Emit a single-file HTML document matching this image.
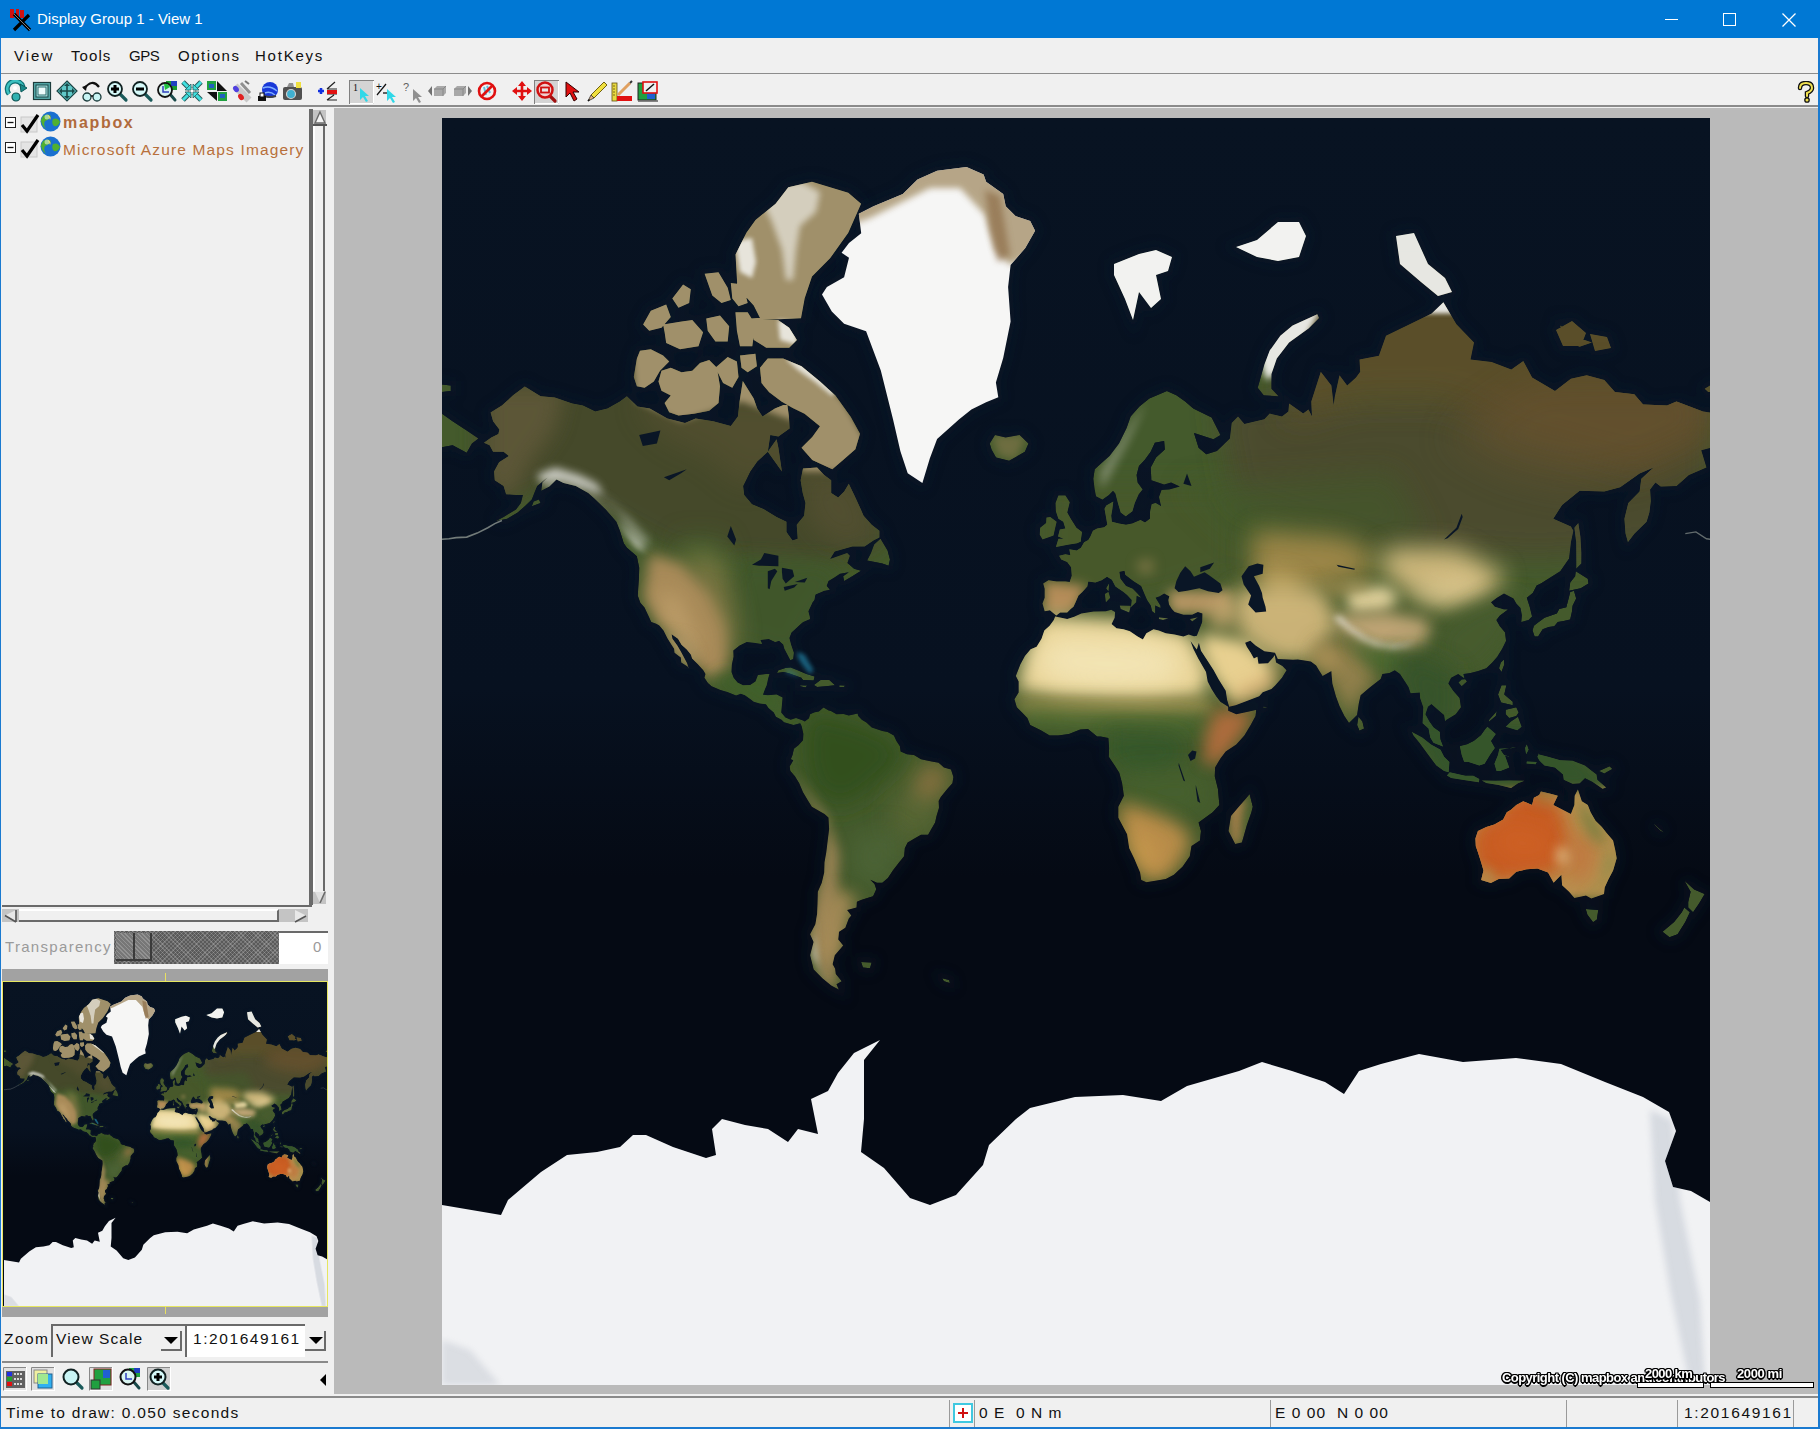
<!DOCTYPE html>
<html><head><meta charset="utf-8">
<style>
*{margin:0;padding:0;box-sizing:border-box}
html,body{width:1820px;height:1429px;overflow:hidden;background:#f0f0f0;font-family:"Liberation Sans",sans-serif}
.a{position:absolute}
#title{left:0;top:0;width:1820px;height:38px;background:#0078d4}
#title .t{left:37px;top:10px;color:#fff;font-size:15px;white-space:nowrap}
#menu{left:1px;top:38px;width:1817px;height:36px;background:#f0f0f0;border-bottom:1px solid #8c8c8c}
#menu span{position:absolute;top:9px;font-size:15px;color:#111;white-space:nowrap}
#tb{left:1px;top:75px;width:1817px;height:32px;background:#f0f0f0;border-bottom:2px solid #8a8a8a}
#left{left:1px;top:108px;width:332px;height:1288px;background:#f0f0f0}
#mapbg{left:334px;top:108px;width:1484px;height:1286px;background:#bababa}
#status{left:1px;top:1396px;width:1817px;height:31px;background:#f0f0f0;border-top:2px solid #8a8a8a}
#status span{position:absolute;top:7px;font-size:15.5px;color:#111;white-space:nowrap;letter-spacing:0.4px}
.sep{position:absolute;top:2px;width:1px;height:28px;background:#9a9a9a}
.bluel{left:0;top:38px;width:1px;height:1391px;background:#1a7ad0}
.bluer{left:1818px;top:38px;width:2px;height:1391px;background:#1a7ad0}
.blueb{left:0;top:1427px;width:1820px;height:2px;background:#1a7ad0}
.ico{position:absolute;top:80px;width:22px;height:22px}
</style></head><body>
<svg width="0" height="0" style="position:absolute"><defs>
<filter id="b2" filterUnits="userSpaceOnUse" x="-100" y="-100" width="1468" height="1467"><feGaussianBlur stdDeviation="2"/></filter><filter id="b3" filterUnits="userSpaceOnUse" x="-100" y="-100" width="1468" height="1467"><feGaussianBlur stdDeviation="3"/></filter><filter id="b4" filterUnits="userSpaceOnUse" x="-100" y="-100" width="1468" height="1467"><feGaussianBlur stdDeviation="4"/></filter><filter id="b5" filterUnits="userSpaceOnUse" x="-100" y="-100" width="1468" height="1467"><feGaussianBlur stdDeviation="5"/></filter><filter id="b6" filterUnits="userSpaceOnUse" x="-100" y="-100" width="1468" height="1467"><feGaussianBlur stdDeviation="6"/></filter><filter id="b7" filterUnits="userSpaceOnUse" x="-100" y="-100" width="1468" height="1467"><feGaussianBlur stdDeviation="7"/></filter><filter id="b8" filterUnits="userSpaceOnUse" x="-100" y="-100" width="1468" height="1467"><feGaussianBlur stdDeviation="8"/></filter><filter id="b9" filterUnits="userSpaceOnUse" x="-100" y="-100" width="1468" height="1467"><feGaussianBlur stdDeviation="9"/></filter><filter id="b10" filterUnits="userSpaceOnUse" x="-100" y="-100" width="1468" height="1467"><feGaussianBlur stdDeviation="10"/></filter><filter id="b12" filterUnits="userSpaceOnUse" x="-100" y="-100" width="1468" height="1467"><feGaussianBlur stdDeviation="12"/></filter><filter id="b14" filterUnits="userSpaceOnUse" x="-100" y="-100" width="1468" height="1467"><feGaussianBlur stdDeviation="14"/></filter><filter id="b16" filterUnits="userSpaceOnUse" x="-100" y="-100" width="1468" height="1467"><feGaussianBlur stdDeviation="16"/></filter><filter id="b18" filterUnits="userSpaceOnUse" x="-100" y="-100" width="1468" height="1467"><feGaussianBlur stdDeviation="18"/></filter><filter id="b20" filterUnits="userSpaceOnUse" x="-100" y="-100" width="1468" height="1467"><feGaussianBlur stdDeviation="20"/></filter>
<clipPath id="grclip"><path d="M416.8,95.7L431.5,88.3L460.8,76.1L475.5,61.4L495.1,52.8L524.5,49.1L541.6,56.5L544.1,63.8L561.2,76.1L563.7,88.3L573.5,98.1L588.2,103.0L593.1,112.8L583.3,129.9L568.6,147.1L566.1,169.1L568.6,203.4L561.2,240.1L553.9,264.6L556.3,279.3L544.1,284.2L529.4,291.5L517.2,301.3L495.1,320.9L487.8,340.5L480.4,365.0L465.7,355.2L458.4,333.2L451.0,301.3L438.8,252.4L424.1,213.2L402.1,205.8L389.8,193.6L380.0,176.5L384.9,169.1L402.1,159.3L407.0,139.7L399.6,134.8L407.0,125.0L419.2,115.3Z"/></clipPath>
<clipPath id="antclip"><path d="M0.0,1087.0L59.0,1097.0L66.0,1082.0L99.0,1054.0L125.0,1037.0L155.0,1034.0L178.0,1029.0L191.0,1017.0L204.0,1017.0L231.0,1029.0L264.0,1040.0L274.0,1037.0L270.0,1011.0L280.0,1001.0L303.0,1007.0L326.0,1011.0L346.0,1024.0L356.0,1011.0L376.0,1016.0L369.0,981.0L386.0,973.0L396.0,955.0L412.0,935.0L438.0,922.0L422.0,942.0L422.0,1001.0L419.0,1034.0L442.0,1050.0L468.0,1080.0L488.0,1087.0L514.0,1077.0L541.0,1047.0L547.0,1027.0L574.0,1001.0L588.0,990.0L633.0,979.0L681.0,977.0L719.0,983.0L745.0,968.0L797.0,953.0L820.0,944.0L850.0,953.0L883.0,964.0L902.0,976.0L917.0,953.0L939.0,946.0L977.0,936.0L1021.0,944.0L1074.0,940.0L1119.0,946.0L1163.0,964.0L1201.0,979.0L1227.0,994.0L1234.0,1013.0L1223.0,1043.0L1231.0,1069.0L1249.0,1073.0L1268.0,1084.0L1270.0,1272.0L-2.0,1272.0Z"/></clipPath>
<clipPath id="landclip"><path d="M41.9,324.7L49.3,319.5L56.4,316.0L57.4,311.5L51.1,303.2L48.6,294.6L59.9,287.6L71.1,277.3L82.8,268.6L98.6,278.3L112.7,279.4L130.3,285.6L140.9,287.6L153.2,293.6L165.5,290.6L177.9,283.6L184.9,278.3L195.5,288.6L207.8,290.6L225.4,300.4L243.0,305.1L253.6,300.4L271.2,303.2L288.8,307.9L295.9,298.5L297.6,283.6L300.8,263.1L311.7,280.4L315.2,290.6L320.5,298.5L332.9,290.6L345.2,285.6L346.9,298.5L347.6,310.6L336.4,318.6L328.3,316.9L325.8,333.8L315.2,343.5L308.2,353.4L301.1,367.9L302.2,376.9L310.0,386.2L322.3,391.4L334.6,398.9L344.5,403.8L344.5,413.9L350.5,422.5L355.7,420.8L354.7,406.8L362.1,397.7L363.5,384.9L360.7,374.9L358.6,362.2L361.0,350.4L375.1,349.6L382.2,357.1L389.2,362.2L389.2,374.9L396.2,379.6L402.2,373.5L406.8,365.8L412.8,378.3L417.4,388.2L421.6,397.7L429.7,406.8L437.5,412.7L437.5,419.6L431.5,422.5L422.7,428.6L410.3,428.6L398.0,431.9L392.7,433.5L388.1,441.0L405.1,435.1L407.9,437.8L405.4,445.1L412.1,450.8L419.1,452.8L410.3,458.2L402.2,463.1L401.2,458.2L406.8,454.3L398.0,455.8L392.7,459.2L386.4,463.1L384.6,468.0L387.8,471.7L382.2,472.7L373.4,476.4L372.3,481.9L370.2,484.7L369.5,486.5L366.3,493.2L367.7,498.4L368.1,501.0L361.0,504.0L357.5,507.0L349.4,514.5L347.3,519.9L349.1,526.8L351.9,534.7L351.2,541.0L348.3,542.2L345.5,536.7L342.4,530.8L341.3,526.4L337.1,522.7L333.2,524.0L326.9,521.1L322.3,521.5L318.4,521.9L320.2,526.0L311.7,524.8L304.7,524.0L297.6,527.6L291.3,532.4L291.6,538.7L289.9,546.4L289.5,554.1L291.6,559.8L295.5,564.6L301.1,567.2L308.2,566.9L313.5,563.5L315.9,557.1L324.0,556.0L327.6,556.0L326.2,560.5L324.7,567.2L323.0,570.9L320.9,576.8L325.8,577.2L334.6,576.4L340.6,579.4L339.9,587.3L339.2,594.5L343.4,599.6L348.7,601.7L354.0,599.9L361.0,602.4L362.8,603.5L367.0,600.3L368.1,596.3L372.7,594.2L376.9,593.5L381.5,589.5L386.7,592.4L388.9,593.1L394.5,596.3L401.5,596.0L406.8,597.4L415.6,595.6L416.3,598.1L419.8,601.7L424.4,604.5L429.7,609.5L440.3,613.1L445.6,614.1L451.9,617.6L454.4,622.9L457.9,628.2L458.6,633.5L464.9,636.3L472.0,637.0L479.0,641.2L489.6,643.4L496.6,644.8L501.9,649.4L509.0,651.5L511.4,658.9L510.4,665.3L505.4,670.7L498.7,678.9L496.6,682.9L497.0,689.8L494.5,697.9L493.1,704.6L489.9,709.9L486.1,716.7L479.0,716.7L473.7,719.8L465.6,724.4L462.8,730.3L462.1,738.2L457.2,744.3L450.8,752.5L445.9,760.0L440.3,764.7L435.0,764.7L428.3,761.7L432.5,766.0L434.3,771.2L431.1,778.3L419.1,781.9L414.9,783.7L414.6,789.6L405.1,792.0L409.3,797.6L406.8,800.5L403.3,809.7L397.0,813.7L396.2,821.4L401.2,827.6L392.7,837.3L390.6,846.2L393.1,850.8L393.8,856.0L399.8,863.2L394.5,866.3L397.0,871.8L389.2,867.5L380.4,860.2L371.6,851.4L368.1,837.3L371.6,824.0L368.1,816.2L373.4,806.3L375.1,795.7L375.5,786.4L375.8,773.8L379.7,765.1L382.2,754.6L382.5,744.3L384.3,734.2L385.7,722.5L387.1,711.0L386.4,699.4L382.5,696.1L369.8,688.7L365.3,681.5L361.0,674.2L357.2,665.3L352.9,658.2L348.3,652.9L347.6,648.6L351.2,642.3L348.7,641.2L350.5,637.0L351.9,630.7L356.4,627.2L361.0,622.2L361.4,615.9L359.6,608.1L358.2,605.3L351.5,607.0L342.0,604.2L339.5,601.7L333.9,598.8L331.8,594.5L326.5,589.9L324.0,586.3L317.7,585.5L311.7,583.7L308.5,581.2L302.9,577.2L298.7,575.7L294.1,577.5L285.3,573.9L278.3,572.0L269.5,568.3L265.9,565.0L262.4,559.8L263.5,556.0L261.3,552.2L256.1,546.4L250.1,540.6L249.0,536.7L244.8,531.6L239.5,526.8L236.0,520.7L229.6,516.2L230.4,520.7L235.3,527.6L238.8,533.6L242.0,539.5L245.1,545.3L246.9,550.7L245.5,548.4L239.2,544.5L238.8,539.5L232.5,534.7L232.1,530.8L228.2,524.8L225.4,520.3L221.5,512.4L217.3,507.4L214.2,505.7L209.2,504.0L207.1,499.3L204.6,494.0L202.5,489.6L198.3,484.7L195.8,477.8L196.2,470.3L196.9,460.7L197.2,449.7L194.8,438.3L184.9,429.7L181.7,425.3L177.9,412.7L174.4,403.8L163.8,391.4L152.2,380.3L146.2,374.9L133.8,367.9L121.5,365.1L114.5,361.5L107.4,368.6L99.3,372.8L100.4,364.4L105.7,359.3L95.1,367.9L92.3,374.9L89.8,381.6L82.8,388.2L75.7,394.5L65.2,400.7L53.5,403.2L61.6,398.9L74.0,391.4L78.9,384.9L81.0,376.9L74.0,376.9L64.1,376.2L61.6,367.9L52.8,362.2L52.1,353.4L57.1,344.2L66.9,337.9L61.6,333.8L51.1,333.8L47.6,327.2ZM614.3,497.5L611.8,495.4L607.9,492.3L602.7,493.2L600.5,485.6L602.7,479.7L602.7,470.8L601.2,465.6L606.5,462.2L614.6,463.6L623.4,463.6L627.7,464.1L629.8,457.8L629.1,449.2L625.2,444.1L619.2,441.5L617.1,437.8L623.4,436.2L628.4,437.3L627.3,431.3L634.7,432.4L638.9,429.7L642.1,424.2L646.3,421.9L648.4,418.5L650.9,412.7L655.1,410.4L662.2,409.2L665.3,406.8L664.3,400.7L662.5,390.7L664.3,387.5L671.3,383.6L670.3,391.4L669.2,397.7L669.9,403.8L677.0,405.6L684.0,406.8L690.4,405.6L698.5,402.0L703.0,404.4L708.0,400.7L708.0,394.5L709.7,386.2L713.6,384.9L719.2,388.2L717.1,378.9L719.6,372.1L727.3,371.4L737.9,368.6L729.1,364.4L722.1,366.5L709.4,362.2L708.7,349.6L714.0,339.5L722.8,331.4L722.1,323.0L712.9,324.7L708.7,333.8L702.7,341.9L697.0,348.1L694.6,357.1L695.6,364.4L700.6,371.4L696.7,376.2L692.8,384.9L690.4,393.3L683.7,398.3L678.7,394.5L675.9,384.9L673.4,375.6L671.0,372.8L666.8,376.9L660.4,381.6L654.1,378.3L652.7,371.4L651.3,360.8L652.7,351.2L658.7,345.8L667.5,337.9L677.0,325.5L684.7,309.7L688.6,298.5L697.4,288.6L707.3,280.4L724.9,273.0L734.4,277.3L743.2,283.6L751.3,290.6L769.6,299.4L778.4,316.9L771.4,321.2L752.0,315.1L756.6,329.7L764.3,336.3L774.9,333.0L787.9,320.4L789.7,305.1L796.0,298.5L802.4,306.0L822.4,301.3L827.7,295.6L840.0,298.5L846.4,293.6L847.1,285.6L861.2,295.6L866.5,291.6L870.0,298.5L869.3,283.6L878.8,253.8L889.4,267.5L892.9,298.5L887.6,316.0L892.9,278.3L897.5,257.3L905.2,267.5L914.0,259.6L918.2,253.8L917.5,241.6L936.9,237.8L944.0,217.7L965.1,207.6L989.7,195.5L1001.4,184.2L1014.4,206.2L1032.0,224.6L1028.5,241.6L1049.6,244.1L1069.3,251.4L1081.3,242.9L1090.1,259.6L1113.0,273.0L1128.9,260.8L1144.7,257.3L1162.3,261.9L1172.9,274.1L1192.3,276.2L1201.1,286.6L1225.0,287.6L1234.5,283.6L1261.0,293.6L1269.8,294.6L1269.8,329.7L1259.2,332.2L1264.5,349.6L1246.9,357.1L1234.5,367.9L1218.7,368.6L1213.4,364.4L1208.1,371.4L1208.8,382.9L1207.4,394.5L1204.6,403.8L1192.6,415.6L1185.9,424.2L1183.5,415.6L1182.4,400.7L1186.3,384.9L1197.6,373.5L1199.3,360.8L1211.6,349.6L1197.6,355.6L1178.2,369.3L1162.3,373.5L1137.7,372.8L1120.1,386.9L1111.3,400.7L1128.9,408.6L1131.3,412.7L1128.9,424.2L1127.1,440.4L1118.3,453.3L1098.9,465.6L1094.7,467.5L1090.8,475.0L1084.8,479.7L1087.7,488.7L1090.1,498.4L1086.6,501.9L1079.2,504.0L1079.9,497.5L1078.5,490.1L1074.3,485.6L1071.5,480.6L1062.0,475.5L1054.9,479.7L1048.9,484.2L1052.8,488.7L1062.0,491.4L1065.8,491.4L1057.7,497.5L1054.2,501.9L1057.7,508.2L1063.0,514.5L1063.4,518.6L1064.1,522.7L1060.2,530.8L1055.3,538.7L1050.3,544.5L1044.3,550.3L1036.2,553.0L1028.5,554.9L1021.4,556.0L1022.5,560.5L1016.2,556.0L1009.1,559.8L1006.3,565.4L1011.2,572.8L1017.6,580.1L1019.0,589.2L1013.7,596.3L1004.5,601.7L1003.1,603.1L1002.1,597.1L996.8,592.4L992.6,588.8L989.4,585.9L985.9,588.8L983.4,596.3L987.3,603.5L991.5,609.5L997.8,614.1L998.2,621.2L1001.0,628.6L991.5,624.7L988.3,619.4L986.6,610.6L980.6,605.3L980.9,598.1L981.3,589.2L978.1,580.1L977.8,574.6L968.6,575.3L966.5,569.1L961.6,561.6L958.0,556.0L952.8,552.2L947.5,554.9L940.4,556.0L938.7,560.9L927.4,569.8L918.6,577.2L916.8,585.5L915.1,597.1L907.0,604.9L902.4,598.1L897.5,588.1L893.9,578.3L890.4,565.7L889.7,557.9L889.4,553.0L880.6,557.9L877.0,552.2L874.2,547.6L868.9,543.4L855.9,541.4L851.0,541.8L835.8,541.0L833.0,534.7L822.4,533.2L813.6,527.6L808.3,522.7L803.1,524.8L804.8,528.8L808.7,534.7L811.9,540.6L815.4,538.7L816.5,545.7L826.0,545.3L831.2,539.5L832.7,537.1L834.1,544.5L840.4,548.0L844.6,552.2L840.0,559.8L833.4,567.2L829.5,570.9L820.7,574.2L817.2,578.3L804.8,583.0L793.6,587.3L787.2,588.8L785.1,581.9L783.7,572.8L776.7,561.6L771.7,552.2L765.4,542.6L759.0,532.8L756.9,524.8L754.8,517.8L757.3,511.2L760.1,504.0L760.4,495.4L755.9,494.0L750.2,496.7L741.4,496.7L732.6,494.0L729.8,490.9L727.0,486.5L726.3,481.9L727.3,478.3L722.1,475.5L717.8,478.3L713.6,479.7L718.5,487.8L718.5,490.1L713.2,487.4L713.2,495.4L710.1,493.2L708.7,487.4L705.1,481.9L702.3,475.5L699.2,468.0L691.4,463.1L683.3,456.8L682.6,452.8L677.3,453.8L678.4,460.7L684.0,468.0L690.7,470.8L694.9,475.0L699.2,479.7L694.6,477.8L694.2,484.2L688.9,489.2L689.7,481.9L685.1,476.9L681.5,474.1L673.4,468.4L669.9,461.7L665.0,458.7L659.7,462.2L653.4,464.6L646.3,463.6L645.3,468.4L640.3,474.1L636.5,477.4L633.6,484.2L631.5,488.7L628.7,490.9L625.2,494.5L618.2,494.5ZM-1.8,294.6L10.6,303.2L24.7,312.4L36.3,320.4L29.9,325.5L24.7,334.7L10.6,327.2L-1.8,329.7ZM613.2,498.4L625.2,501.0L632.2,498.8L639.3,495.4L651.6,493.6L663.9,493.2L669.2,491.8L673.1,494.0L672.7,499.7L669.6,506.1L674.5,510.3L681.5,511.2L687.9,513.3L695.6,518.6L700.9,521.5L704.4,515.3L711.5,511.2L716.8,512.4L723.8,515.3L732.6,516.6L741.4,518.6L746.7,516.6L752.0,518.2L754.8,517.8L756.9,524.8L754.8,531.6L748.5,523.1L751.3,530.8L756.2,540.6L764.0,554.1L765.7,563.5L769.6,570.9L774.2,578.3L778.4,583.7L786.2,588.8L786.2,592.8L794.3,596.3L805.9,593.8L814.3,591.7L813.6,598.1L808.7,607.0L802.4,617.6L794.3,626.5L783.7,633.5L778.4,640.5L773.1,649.4L772.8,658.2L775.9,670.7L777.4,686.9L770.7,694.2L756.6,704.6L759.0,712.9L758.0,722.5L749.5,727.9L747.8,738.2L740.7,748.4L731.9,756.7L723.8,760.9L704.4,764.3L699.2,762.1L698.1,754.6L692.1,740.2L687.2,730.3L685.1,716.3L676.3,699.8L676.3,688.7L681.9,677.8L680.1,665.3L677.3,654.7L672.7,647.6L666.8,638.8L667.1,630.0L666.4,620.1L658.7,618.4L655.1,618.4L646.0,610.9L638.2,611.6L627.0,615.9L616.4,617.6L607.6,617.6L598.8,612.3L588.2,607.0L585.4,599.9L580.1,594.5L574.8,589.2L572.4,581.2L576.6,574.6L576.6,563.5L573.8,557.9L578.3,546.4L582.9,537.9L588.6,531.2L594.6,528.8L599.5,520.7L602.3,512.4L607.6,507.8L611.8,501.9ZM807.6,676.0L810.8,688.7L809.4,694.2L804.8,707.2L799.9,724.4L793.2,726.0L786.5,712.9L789.0,697.9L796.0,689.8L803.1,681.5ZM577.6,316.9L586.5,325.5L582.9,333.8L567.1,342.7L554.0,339.5L549.5,331.4L547.7,325.5L553.0,316.9L563.6,319.5ZM623.4,377.6L627.7,384.2L625.2,394.5L628.7,400.7L634.4,409.8L640.0,413.9L638.9,421.4L638.9,423.6L635.1,425.3L627.0,426.4L613.9,429.1L616.4,420.8L621.7,420.8L616.0,418.5L617.8,411.6L623.4,410.4L621.3,403.8L616.4,400.7L613.9,393.3L613.6,384.9L616.4,377.6ZM608.3,398.9L614.6,403.8L612.9,411.0L611.5,417.4L600.5,421.4L597.7,416.8L598.1,409.8L604.1,405.0L604.4,399.5ZM1136.3,405.0L1138.4,418.5L1139.4,435.1L1139.4,445.6L1134.2,450.8L1134.2,437.8L1134.2,424.2L1132.4,409.8ZM1133.8,453.3L1145.8,460.7L1146.5,465.6L1138.7,470.3L1127.1,472.7L1128.2,464.6L1133.1,458.2ZM1132.0,472.7L1134.2,480.6L1130.6,487.8L1129.9,494.0L1128.2,501.4L1121.8,503.1L1115.8,504.0L1112.3,508.2L1106.7,509.1L1100.7,511.2L1096.1,518.6L1092.6,518.6L1090.5,512.4L1091.9,507.8L1095.4,504.9L1102.5,499.7L1114.8,495.4L1117.2,490.9L1124.3,489.2L1126.8,479.7L1128.2,474.1ZM1062.0,541.4L1062.3,546.4L1059.5,554.1L1057.0,550.3L1058.8,544.5ZM1023.2,561.3L1025.0,563.5L1019.7,568.3L1016.5,564.6L1019.7,561.6ZM1059.5,567.2L1064.4,567.2L1062.3,576.4L1070.8,583.7L1070.8,587.3L1059.1,584.5L1056.0,576.4ZM1076.0,598.8L1079.6,608.8L1075.3,612.3L1063.7,608.8L1069.0,603.5ZM1074.3,589.2L1076.7,594.5L1074.3,598.1L1067.2,599.9L1063.7,596.3L1063.7,591.7ZM1054.9,593.1L1053.8,598.1L1046.8,603.8L1047.2,601.7ZM1045.4,608.8L1053.8,615.9L1048.9,622.9L1052.8,630.0L1047.9,637.0L1042.6,645.8L1037.3,647.6L1026.7,644.1L1022.1,643.7L1019.7,637.0L1017.9,628.2L1025.0,626.5L1032.0,622.9L1039.1,617.3L1042.6,612.3ZM969.7,613.8L980.2,619.4L989.0,626.5L998.5,631.7L1002.1,638.8L1007.4,644.1L1006.7,654.3L1002.1,652.9L994.3,647.6L989.0,640.5L983.8,633.5L977.4,624.7L971.4,617.6ZM1007.7,654.3L1023.2,657.8L1031.3,657.8L1037.3,661.0L1036.9,664.2L1025.0,662.5L1009.1,660.0L1004.9,657.5ZM1039.8,662.5L1053.1,662.8L1067.2,662.5L1082.4,662.8L1076.0,665.3L1069.0,669.9L1056.7,667.1L1044.3,664.9ZM1074.3,628.9L1058.4,631.7L1062.0,637.0L1067.9,638.8L1063.0,637.7L1067.2,649.4L1058.4,652.9L1054.6,652.9L1052.4,645.8L1056.0,637.0L1057.4,630.7L1070.8,630.0ZM1084.8,626.5L1086.6,631.7L1084.1,636.3L1083.1,630.0ZM1084.8,643.4L1094.7,644.1L1093.7,646.2L1084.5,645.5ZM1096.1,636.3L1106.0,638.8L1118.3,642.3L1130.6,642.7L1143.0,647.6L1150.0,652.9L1154.6,656.4L1155.3,661.7L1164.1,669.6L1160.6,670.7L1150.0,663.5L1143.0,660.0L1137.7,665.3L1130.6,665.7L1121.8,661.7L1121.1,656.4L1113.0,649.4L1102.5,647.6L1098.9,644.1L1097.2,642.3L1095.4,638.8L1097.2,635.3ZM1167.6,648.3L1170.4,651.1L1162.3,655.4L1157.0,652.9ZM1135.9,671.4L1139.8,683.3L1145.8,686.9L1148.6,694.2L1153.5,702.7L1159.9,709.1L1164.4,714.8L1171.1,722.5L1173.3,732.3L1174.7,740.2L1171.1,752.5L1166.6,760.9L1162.7,769.5L1162.0,776.1L1149.3,780.5L1144.0,777.4L1132.4,780.1L1127.1,773.8L1120.1,767.3L1119.4,756.7L1111.6,764.7L1106.0,754.6L1095.4,750.4L1084.8,751.2L1074.3,753.7L1067.2,760.4L1056.7,760.9L1048.9,765.1L1039.1,762.1L1041.5,752.5L1039.1,744.3L1035.9,734.2L1033.8,728.3L1033.4,720.6L1035.9,712.9L1044.3,709.1L1052.4,706.5L1061.2,701.6L1064.8,694.2L1069.0,691.7L1074.3,686.9L1081.3,683.3L1090.1,686.9L1091.9,679.7L1097.2,677.1L1098.9,673.5L1109.5,676.0L1115.8,677.8L1111.3,686.9L1128.9,696.1L1132.4,686.9L1132.7,677.8ZM1143.7,791.0L1156.3,792.0L1154.9,801.4L1151.1,804.3L1145.4,796.7ZM1242.3,762.6L1252.2,771.6L1262.7,776.1L1257.4,785.1L1251.1,794.3L1246.2,789.6L1246.2,784.1L1248.6,773.8ZM1242.3,789.6L1247.9,794.3L1243.3,803.9L1235.6,816.2L1227.5,819.3L1220.5,813.7L1232.1,803.9L1239.8,794.3ZM916.5,598.8L920.4,603.5L922.1,610.6L917.5,612.7L915.1,607.0ZM348.7,549.5L343.4,549.9L336.4,552.2L335.0,554.9L341.7,554.1L346.9,555.2L359.3,559.8L361.0,562.0L371.6,562.4L372.7,558.6L364.5,556.0L355.7,552.2ZM378.6,562.0L387.4,562.0L393.1,567.2L383.9,568.3L375.1,569.1L371.9,566.9ZM358.2,567.2L365.3,567.6L363.5,569.5L358.2,568.3ZM397.3,567.2L402.9,567.6L402.2,569.1L397.3,569.1ZM438.5,420.8L445.6,432.4L448.0,441.5L446.6,447.7L440.3,445.6L425.1,442.5L429.0,435.1L432.2,426.4ZM336.4,329.7L334.6,321.2L325.8,333.8L339.9,353.4ZM419.1,844.0L429.7,844.5L428.0,850.2L420.9,849.6ZM500.2,860.2L507.2,862.0L507.9,865.0L501.9,863.2ZM1211.6,705.4L1222.2,714.8L1218.7,712.9L1212.7,707.2ZM96.9,381.6L98.6,384.9L89.8,388.2L91.6,383.6ZM677.7,487.4L688.9,487.8L687.2,494.5L678.7,490.9ZM666.4,474.1L668.2,479.7L663.9,484.2L662.9,476.0ZM667.1,465.6L666.4,473.2L664.3,470.3ZM717.1,499.3L726.6,500.6L721.0,501.9L716.8,501.0ZM755.9,499.3L750.2,503.6L747.8,501.0ZM821.7,588.4L826.0,589.9L820.7,589.5ZM875.3,196.3L850.6,207.6L838.3,217.7L827.7,232.6L822.4,246.6L818.9,258.5L815.7,269.7L821.7,277.3L836.5,278.3L829.5,270.8L829.5,256.1L834.8,240.4L847.1,224.6L866.5,210.6L877.0,200.1ZM1118.3,207.6L1130.6,217.7L1150.0,224.6L1137.7,228.7L1120.1,221.9ZM1262.7,270.8L1269.8,266.4L1269.8,274.1L1266.2,274.1ZM-1.8,266.4L8.8,267.5L8.8,273.0L-1.8,274.1ZM191.8,258.9L194.9,240.5L198.0,232.8L208.8,231.2L221.1,237.4L227.2,243.5L218.0,252.8L211.8,263.5L202.6,269.7L194.9,268.2ZM216.5,263.5L219.5,252.8L228.8,249.7L239.5,254.3L250.3,252.8L258.0,245.1L267.2,242.0L274.9,249.7L278.0,268.2L276.5,285.1L267.2,292.8L251.8,295.8L236.5,297.4L227.2,294.3L222.6,285.1L228.8,277.4L219.5,272.8ZM273.4,249.7L285.7,238.9L294.9,243.5L296.5,258.9L290.3,269.7L281.1,265.1ZM298.0,237.4L313.4,235.8L314.9,248.2L305.7,254.3L299.5,249.7ZM318.0,249.7L325.7,240.5L341.1,240.5L359.5,248.2L378.0,263.5L393.4,277.4L408.8,298.9L418.0,315.8L413.4,331.2L401.1,342.0L390.3,351.2L370.3,342.0L359.5,329.7L370.3,318.9L378.0,308.2L362.6,295.8L350.3,289.7L339.5,283.5L327.2,274.3L319.5,265.1ZM221.1,206.6L239.5,203.5L250.3,202.0L261.1,214.3L256.5,228.2L238.0,231.2L224.2,225.1L222.6,214.3ZM201.1,206.6L208.8,192.8L224.2,186.6L228.8,198.9L219.5,209.7L207.2,212.8ZM230.3,180.5L241.1,166.6L248.8,171.2L247.2,185.1L236.5,189.7ZM264.2,200.5L278.0,197.4L287.2,208.2L285.7,223.5L273.4,223.5L265.7,212.8ZM262.6,155.8L276.5,154.3L285.7,169.7L288.8,182.0L279.5,185.1L270.3,177.4ZM288.8,165.1L301.1,166.6L305.7,185.1L296.5,188.2L290.3,180.5ZM293.4,194.3L305.7,194.3L313.4,206.6L310.3,228.2L298.0,228.2L294.9,212.8ZM308.8,200.5L331.8,198.9L347.2,209.7L354.9,222.0L347.2,229.7L324.2,229.7L311.8,222.0ZM313.5,102.0L333.6,85.7L346.3,69.3L370.0,63.8L406.3,74.8L419.1,85.7L406.3,114.8L388.1,140.3L370.0,158.4L362.7,180.3L359.0,200.3L319.0,202.1L311.7,187.6L295.4,169.4L293.5,136.6L304.4,114.8ZM672.0,146.0L697.0,136.0L714.0,132.0L730.0,139.0L726.0,153.0L714.0,157.0L719.0,181.0L709.0,190.0L697.0,174.0L691.0,202.0L683.0,181.0L672.0,157.0ZM794.0,129.0L815.0,122.0L836.0,104.0L857.0,104.0L864.0,118.0L857.0,139.0L836.0,143.0L815.0,139.0ZM954.0,118.0L972.0,115.0L986.0,146.0L1003.0,160.0L1010.0,174.0L996.0,178.0L979.0,164.0L958.0,146.0ZM1114.0,212.0L1130.0,203.0L1144.0,215.0L1139.0,228.0L1121.0,228.0ZM1148.0,216.0L1165.0,219.0L1169.0,230.0L1153.0,233.0Z"/></clipPath>
<symbol id="world" viewBox="0 0 1268 1267">
<rect width="1268" height="1267" fill="#050a14"/>
<linearGradient id="arct" x1="0" y1="0" x2="0" y2="1"><stop offset="0" stop-color="#081322"/><stop offset="0.45" stop-color="#071120"/><stop offset="0.6" stop-color="#050a14"/></linearGradient><rect width="1268" height="1267" fill="url(#arct)"/>
<path d="M41.9,324.7L49.3,319.5L56.4,316.0L57.4,311.5L51.1,303.2L48.6,294.6L59.9,287.6L71.1,277.3L82.8,268.6L98.6,278.3L112.7,279.4L130.3,285.6L140.9,287.6L153.2,293.6L165.5,290.6L177.9,283.6L184.9,278.3L195.5,288.6L207.8,290.6L225.4,300.4L243.0,305.1L253.6,300.4L271.2,303.2L288.8,307.9L295.9,298.5L297.6,283.6L300.8,263.1L311.7,280.4L315.2,290.6L320.5,298.5L332.9,290.6L345.2,285.6L346.9,298.5L347.6,310.6L336.4,318.6L328.3,316.9L325.8,333.8L315.2,343.5L308.2,353.4L301.1,367.9L302.2,376.9L310.0,386.2L322.3,391.4L334.6,398.9L344.5,403.8L344.5,413.9L350.5,422.5L355.7,420.8L354.7,406.8L362.1,397.7L363.5,384.9L360.7,374.9L358.6,362.2L361.0,350.4L375.1,349.6L382.2,357.1L389.2,362.2L389.2,374.9L396.2,379.6L402.2,373.5L406.8,365.8L412.8,378.3L417.4,388.2L421.6,397.7L429.7,406.8L437.5,412.7L437.5,419.6L431.5,422.5L422.7,428.6L410.3,428.6L398.0,431.9L392.7,433.5L388.1,441.0L405.1,435.1L407.9,437.8L405.4,445.1L412.1,450.8L419.1,452.8L410.3,458.2L402.2,463.1L401.2,458.2L406.8,454.3L398.0,455.8L392.7,459.2L386.4,463.1L384.6,468.0L387.8,471.7L382.2,472.7L373.4,476.4L372.3,481.9L370.2,484.7L369.5,486.5L366.3,493.2L367.7,498.4L368.1,501.0L361.0,504.0L357.5,507.0L349.4,514.5L347.3,519.9L349.1,526.8L351.9,534.7L351.2,541.0L348.3,542.2L345.5,536.7L342.4,530.8L341.3,526.4L337.1,522.7L333.2,524.0L326.9,521.1L322.3,521.5L318.4,521.9L320.2,526.0L311.7,524.8L304.7,524.0L297.6,527.6L291.3,532.4L291.6,538.7L289.9,546.4L289.5,554.1L291.6,559.8L295.5,564.6L301.1,567.2L308.2,566.9L313.5,563.5L315.9,557.1L324.0,556.0L327.6,556.0L326.2,560.5L324.7,567.2L323.0,570.9L320.9,576.8L325.8,577.2L334.6,576.4L340.6,579.4L339.9,587.3L339.2,594.5L343.4,599.6L348.7,601.7L354.0,599.9L361.0,602.4L362.8,603.5L367.0,600.3L368.1,596.3L372.7,594.2L376.9,593.5L381.5,589.5L386.7,592.4L388.9,593.1L394.5,596.3L401.5,596.0L406.8,597.4L415.6,595.6L416.3,598.1L419.8,601.7L424.4,604.5L429.7,609.5L440.3,613.1L445.6,614.1L451.9,617.6L454.4,622.9L457.9,628.2L458.6,633.5L464.9,636.3L472.0,637.0L479.0,641.2L489.6,643.4L496.6,644.8L501.9,649.4L509.0,651.5L511.4,658.9L510.4,665.3L505.4,670.7L498.7,678.9L496.6,682.9L497.0,689.8L494.5,697.9L493.1,704.6L489.9,709.9L486.1,716.7L479.0,716.7L473.7,719.8L465.6,724.4L462.8,730.3L462.1,738.2L457.2,744.3L450.8,752.5L445.9,760.0L440.3,764.7L435.0,764.7L428.3,761.7L432.5,766.0L434.3,771.2L431.1,778.3L419.1,781.9L414.9,783.7L414.6,789.6L405.1,792.0L409.3,797.6L406.8,800.5L403.3,809.7L397.0,813.7L396.2,821.4L401.2,827.6L392.7,837.3L390.6,846.2L393.1,850.8L393.8,856.0L399.8,863.2L394.5,866.3L397.0,871.8L389.2,867.5L380.4,860.2L371.6,851.4L368.1,837.3L371.6,824.0L368.1,816.2L373.4,806.3L375.1,795.7L375.5,786.4L375.8,773.8L379.7,765.1L382.2,754.6L382.5,744.3L384.3,734.2L385.7,722.5L387.1,711.0L386.4,699.4L382.5,696.1L369.8,688.7L365.3,681.5L361.0,674.2L357.2,665.3L352.9,658.2L348.3,652.9L347.6,648.6L351.2,642.3L348.7,641.2L350.5,637.0L351.9,630.7L356.4,627.2L361.0,622.2L361.4,615.9L359.6,608.1L358.2,605.3L351.5,607.0L342.0,604.2L339.5,601.7L333.9,598.8L331.8,594.5L326.5,589.9L324.0,586.3L317.7,585.5L311.7,583.7L308.5,581.2L302.9,577.2L298.7,575.7L294.1,577.5L285.3,573.9L278.3,572.0L269.5,568.3L265.9,565.0L262.4,559.8L263.5,556.0L261.3,552.2L256.1,546.4L250.1,540.6L249.0,536.7L244.8,531.6L239.5,526.8L236.0,520.7L229.6,516.2L230.4,520.7L235.3,527.6L238.8,533.6L242.0,539.5L245.1,545.3L246.9,550.7L245.5,548.4L239.2,544.5L238.8,539.5L232.5,534.7L232.1,530.8L228.2,524.8L225.4,520.3L221.5,512.4L217.3,507.4L214.2,505.7L209.2,504.0L207.1,499.3L204.6,494.0L202.5,489.6L198.3,484.7L195.8,477.8L196.2,470.3L196.9,460.7L197.2,449.7L194.8,438.3L184.9,429.7L181.7,425.3L177.9,412.7L174.4,403.8L163.8,391.4L152.2,380.3L146.2,374.9L133.8,367.9L121.5,365.1L114.5,361.5L107.4,368.6L99.3,372.8L100.4,364.4L105.7,359.3L95.1,367.9L92.3,374.9L89.8,381.6L82.8,388.2L75.7,394.5L65.2,400.7L53.5,403.2L61.6,398.9L74.0,391.4L78.9,384.9L81.0,376.9L74.0,376.9L64.1,376.2L61.6,367.9L52.8,362.2L52.1,353.4L57.1,344.2L66.9,337.9L61.6,333.8L51.1,333.8L47.6,327.2ZM614.3,497.5L611.8,495.4L607.9,492.3L602.7,493.2L600.5,485.6L602.7,479.7L602.7,470.8L601.2,465.6L606.5,462.2L614.6,463.6L623.4,463.6L627.7,464.1L629.8,457.8L629.1,449.2L625.2,444.1L619.2,441.5L617.1,437.8L623.4,436.2L628.4,437.3L627.3,431.3L634.7,432.4L638.9,429.7L642.1,424.2L646.3,421.9L648.4,418.5L650.9,412.7L655.1,410.4L662.2,409.2L665.3,406.8L664.3,400.7L662.5,390.7L664.3,387.5L671.3,383.6L670.3,391.4L669.2,397.7L669.9,403.8L677.0,405.6L684.0,406.8L690.4,405.6L698.5,402.0L703.0,404.4L708.0,400.7L708.0,394.5L709.7,386.2L713.6,384.9L719.2,388.2L717.1,378.9L719.6,372.1L727.3,371.4L737.9,368.6L729.1,364.4L722.1,366.5L709.4,362.2L708.7,349.6L714.0,339.5L722.8,331.4L722.1,323.0L712.9,324.7L708.7,333.8L702.7,341.9L697.0,348.1L694.6,357.1L695.6,364.4L700.6,371.4L696.7,376.2L692.8,384.9L690.4,393.3L683.7,398.3L678.7,394.5L675.9,384.9L673.4,375.6L671.0,372.8L666.8,376.9L660.4,381.6L654.1,378.3L652.7,371.4L651.3,360.8L652.7,351.2L658.7,345.8L667.5,337.9L677.0,325.5L684.7,309.7L688.6,298.5L697.4,288.6L707.3,280.4L724.9,273.0L734.4,277.3L743.2,283.6L751.3,290.6L769.6,299.4L778.4,316.9L771.4,321.2L752.0,315.1L756.6,329.7L764.3,336.3L774.9,333.0L787.9,320.4L789.7,305.1L796.0,298.5L802.4,306.0L822.4,301.3L827.7,295.6L840.0,298.5L846.4,293.6L847.1,285.6L861.2,295.6L866.5,291.6L870.0,298.5L869.3,283.6L878.8,253.8L889.4,267.5L892.9,298.5L887.6,316.0L892.9,278.3L897.5,257.3L905.2,267.5L914.0,259.6L918.2,253.8L917.5,241.6L936.9,237.8L944.0,217.7L965.1,207.6L989.7,195.5L1001.4,184.2L1014.4,206.2L1032.0,224.6L1028.5,241.6L1049.6,244.1L1069.3,251.4L1081.3,242.9L1090.1,259.6L1113.0,273.0L1128.9,260.8L1144.7,257.3L1162.3,261.9L1172.9,274.1L1192.3,276.2L1201.1,286.6L1225.0,287.6L1234.5,283.6L1261.0,293.6L1269.8,294.6L1269.8,329.7L1259.2,332.2L1264.5,349.6L1246.9,357.1L1234.5,367.9L1218.7,368.6L1213.4,364.4L1208.1,371.4L1208.8,382.9L1207.4,394.5L1204.6,403.8L1192.6,415.6L1185.9,424.2L1183.5,415.6L1182.4,400.7L1186.3,384.9L1197.6,373.5L1199.3,360.8L1211.6,349.6L1197.6,355.6L1178.2,369.3L1162.3,373.5L1137.7,372.8L1120.1,386.9L1111.3,400.7L1128.9,408.6L1131.3,412.7L1128.9,424.2L1127.1,440.4L1118.3,453.3L1098.9,465.6L1094.7,467.5L1090.8,475.0L1084.8,479.7L1087.7,488.7L1090.1,498.4L1086.6,501.9L1079.2,504.0L1079.9,497.5L1078.5,490.1L1074.3,485.6L1071.5,480.6L1062.0,475.5L1054.9,479.7L1048.9,484.2L1052.8,488.7L1062.0,491.4L1065.8,491.4L1057.7,497.5L1054.2,501.9L1057.7,508.2L1063.0,514.5L1063.4,518.6L1064.1,522.7L1060.2,530.8L1055.3,538.7L1050.3,544.5L1044.3,550.3L1036.2,553.0L1028.5,554.9L1021.4,556.0L1022.5,560.5L1016.2,556.0L1009.1,559.8L1006.3,565.4L1011.2,572.8L1017.6,580.1L1019.0,589.2L1013.7,596.3L1004.5,601.7L1003.1,603.1L1002.1,597.1L996.8,592.4L992.6,588.8L989.4,585.9L985.9,588.8L983.4,596.3L987.3,603.5L991.5,609.5L997.8,614.1L998.2,621.2L1001.0,628.6L991.5,624.7L988.3,619.4L986.6,610.6L980.6,605.3L980.9,598.1L981.3,589.2L978.1,580.1L977.8,574.6L968.6,575.3L966.5,569.1L961.6,561.6L958.0,556.0L952.8,552.2L947.5,554.9L940.4,556.0L938.7,560.9L927.4,569.8L918.6,577.2L916.8,585.5L915.1,597.1L907.0,604.9L902.4,598.1L897.5,588.1L893.9,578.3L890.4,565.7L889.7,557.9L889.4,553.0L880.6,557.9L877.0,552.2L874.2,547.6L868.9,543.4L855.9,541.4L851.0,541.8L835.8,541.0L833.0,534.7L822.4,533.2L813.6,527.6L808.3,522.7L803.1,524.8L804.8,528.8L808.7,534.7L811.9,540.6L815.4,538.7L816.5,545.7L826.0,545.3L831.2,539.5L832.7,537.1L834.1,544.5L840.4,548.0L844.6,552.2L840.0,559.8L833.4,567.2L829.5,570.9L820.7,574.2L817.2,578.3L804.8,583.0L793.6,587.3L787.2,588.8L785.1,581.9L783.7,572.8L776.7,561.6L771.7,552.2L765.4,542.6L759.0,532.8L756.9,524.8L754.8,517.8L757.3,511.2L760.1,504.0L760.4,495.4L755.9,494.0L750.2,496.7L741.4,496.7L732.6,494.0L729.8,490.9L727.0,486.5L726.3,481.9L727.3,478.3L722.1,475.5L717.8,478.3L713.6,479.7L718.5,487.8L718.5,490.1L713.2,487.4L713.2,495.4L710.1,493.2L708.7,487.4L705.1,481.9L702.3,475.5L699.2,468.0L691.4,463.1L683.3,456.8L682.6,452.8L677.3,453.8L678.4,460.7L684.0,468.0L690.7,470.8L694.9,475.0L699.2,479.7L694.6,477.8L694.2,484.2L688.9,489.2L689.7,481.9L685.1,476.9L681.5,474.1L673.4,468.4L669.9,461.7L665.0,458.7L659.7,462.2L653.4,464.6L646.3,463.6L645.3,468.4L640.3,474.1L636.5,477.4L633.6,484.2L631.5,488.7L628.7,490.9L625.2,494.5L618.2,494.5ZM-1.8,294.6L10.6,303.2L24.7,312.4L36.3,320.4L29.9,325.5L24.7,334.7L10.6,327.2L-1.8,329.7ZM613.2,498.4L625.2,501.0L632.2,498.8L639.3,495.4L651.6,493.6L663.9,493.2L669.2,491.8L673.1,494.0L672.7,499.7L669.6,506.1L674.5,510.3L681.5,511.2L687.9,513.3L695.6,518.6L700.9,521.5L704.4,515.3L711.5,511.2L716.8,512.4L723.8,515.3L732.6,516.6L741.4,518.6L746.7,516.6L752.0,518.2L754.8,517.8L756.9,524.8L754.8,531.6L748.5,523.1L751.3,530.8L756.2,540.6L764.0,554.1L765.7,563.5L769.6,570.9L774.2,578.3L778.4,583.7L786.2,588.8L786.2,592.8L794.3,596.3L805.9,593.8L814.3,591.7L813.6,598.1L808.7,607.0L802.4,617.6L794.3,626.5L783.7,633.5L778.4,640.5L773.1,649.4L772.8,658.2L775.9,670.7L777.4,686.9L770.7,694.2L756.6,704.6L759.0,712.9L758.0,722.5L749.5,727.9L747.8,738.2L740.7,748.4L731.9,756.7L723.8,760.9L704.4,764.3L699.2,762.1L698.1,754.6L692.1,740.2L687.2,730.3L685.1,716.3L676.3,699.8L676.3,688.7L681.9,677.8L680.1,665.3L677.3,654.7L672.7,647.6L666.8,638.8L667.1,630.0L666.4,620.1L658.7,618.4L655.1,618.4L646.0,610.9L638.2,611.6L627.0,615.9L616.4,617.6L607.6,617.6L598.8,612.3L588.2,607.0L585.4,599.9L580.1,594.5L574.8,589.2L572.4,581.2L576.6,574.6L576.6,563.5L573.8,557.9L578.3,546.4L582.9,537.9L588.6,531.2L594.6,528.8L599.5,520.7L602.3,512.4L607.6,507.8L611.8,501.9ZM807.6,676.0L810.8,688.7L809.4,694.2L804.8,707.2L799.9,724.4L793.2,726.0L786.5,712.9L789.0,697.9L796.0,689.8L803.1,681.5ZM577.6,316.9L586.5,325.5L582.9,333.8L567.1,342.7L554.0,339.5L549.5,331.4L547.7,325.5L553.0,316.9L563.6,319.5ZM623.4,377.6L627.7,384.2L625.2,394.5L628.7,400.7L634.4,409.8L640.0,413.9L638.9,421.4L638.9,423.6L635.1,425.3L627.0,426.4L613.9,429.1L616.4,420.8L621.7,420.8L616.0,418.5L617.8,411.6L623.4,410.4L621.3,403.8L616.4,400.7L613.9,393.3L613.6,384.9L616.4,377.6ZM608.3,398.9L614.6,403.8L612.9,411.0L611.5,417.4L600.5,421.4L597.7,416.8L598.1,409.8L604.1,405.0L604.4,399.5ZM1136.3,405.0L1138.4,418.5L1139.4,435.1L1139.4,445.6L1134.2,450.8L1134.2,437.8L1134.2,424.2L1132.4,409.8ZM1133.8,453.3L1145.8,460.7L1146.5,465.6L1138.7,470.3L1127.1,472.7L1128.2,464.6L1133.1,458.2ZM1132.0,472.7L1134.2,480.6L1130.6,487.8L1129.9,494.0L1128.2,501.4L1121.8,503.1L1115.8,504.0L1112.3,508.2L1106.7,509.1L1100.7,511.2L1096.1,518.6L1092.6,518.6L1090.5,512.4L1091.9,507.8L1095.4,504.9L1102.5,499.7L1114.8,495.4L1117.2,490.9L1124.3,489.2L1126.8,479.7L1128.2,474.1ZM1062.0,541.4L1062.3,546.4L1059.5,554.1L1057.0,550.3L1058.8,544.5ZM1023.2,561.3L1025.0,563.5L1019.7,568.3L1016.5,564.6L1019.7,561.6ZM1059.5,567.2L1064.4,567.2L1062.3,576.4L1070.8,583.7L1070.8,587.3L1059.1,584.5L1056.0,576.4ZM1076.0,598.8L1079.6,608.8L1075.3,612.3L1063.7,608.8L1069.0,603.5ZM1074.3,589.2L1076.7,594.5L1074.3,598.1L1067.2,599.9L1063.7,596.3L1063.7,591.7ZM1054.9,593.1L1053.8,598.1L1046.8,603.8L1047.2,601.7ZM1045.4,608.8L1053.8,615.9L1048.9,622.9L1052.8,630.0L1047.9,637.0L1042.6,645.8L1037.3,647.6L1026.7,644.1L1022.1,643.7L1019.7,637.0L1017.9,628.2L1025.0,626.5L1032.0,622.9L1039.1,617.3L1042.6,612.3ZM969.7,613.8L980.2,619.4L989.0,626.5L998.5,631.7L1002.1,638.8L1007.4,644.1L1006.7,654.3L1002.1,652.9L994.3,647.6L989.0,640.5L983.8,633.5L977.4,624.7L971.4,617.6ZM1007.7,654.3L1023.2,657.8L1031.3,657.8L1037.3,661.0L1036.9,664.2L1025.0,662.5L1009.1,660.0L1004.9,657.5ZM1039.8,662.5L1053.1,662.8L1067.2,662.5L1082.4,662.8L1076.0,665.3L1069.0,669.9L1056.7,667.1L1044.3,664.9ZM1074.3,628.9L1058.4,631.7L1062.0,637.0L1067.9,638.8L1063.0,637.7L1067.2,649.4L1058.4,652.9L1054.6,652.9L1052.4,645.8L1056.0,637.0L1057.4,630.7L1070.8,630.0ZM1084.8,626.5L1086.6,631.7L1084.1,636.3L1083.1,630.0ZM1084.8,643.4L1094.7,644.1L1093.7,646.2L1084.5,645.5ZM1096.1,636.3L1106.0,638.8L1118.3,642.3L1130.6,642.7L1143.0,647.6L1150.0,652.9L1154.6,656.4L1155.3,661.7L1164.1,669.6L1160.6,670.7L1150.0,663.5L1143.0,660.0L1137.7,665.3L1130.6,665.7L1121.8,661.7L1121.1,656.4L1113.0,649.4L1102.5,647.6L1098.9,644.1L1097.2,642.3L1095.4,638.8L1097.2,635.3ZM1167.6,648.3L1170.4,651.1L1162.3,655.4L1157.0,652.9ZM1135.9,671.4L1139.8,683.3L1145.8,686.9L1148.6,694.2L1153.5,702.7L1159.9,709.1L1164.4,714.8L1171.1,722.5L1173.3,732.3L1174.7,740.2L1171.1,752.5L1166.6,760.9L1162.7,769.5L1162.0,776.1L1149.3,780.5L1144.0,777.4L1132.4,780.1L1127.1,773.8L1120.1,767.3L1119.4,756.7L1111.6,764.7L1106.0,754.6L1095.4,750.4L1084.8,751.2L1074.3,753.7L1067.2,760.4L1056.7,760.9L1048.9,765.1L1039.1,762.1L1041.5,752.5L1039.1,744.3L1035.9,734.2L1033.8,728.3L1033.4,720.6L1035.9,712.9L1044.3,709.1L1052.4,706.5L1061.2,701.6L1064.8,694.2L1069.0,691.7L1074.3,686.9L1081.3,683.3L1090.1,686.9L1091.9,679.7L1097.2,677.1L1098.9,673.5L1109.5,676.0L1115.8,677.8L1111.3,686.9L1128.9,696.1L1132.4,686.9L1132.7,677.8ZM1143.7,791.0L1156.3,792.0L1154.9,801.4L1151.1,804.3L1145.4,796.7ZM1242.3,762.6L1252.2,771.6L1262.7,776.1L1257.4,785.1L1251.1,794.3L1246.2,789.6L1246.2,784.1L1248.6,773.8ZM1242.3,789.6L1247.9,794.3L1243.3,803.9L1235.6,816.2L1227.5,819.3L1220.5,813.7L1232.1,803.9L1239.8,794.3ZM916.5,598.8L920.4,603.5L922.1,610.6L917.5,612.7L915.1,607.0ZM348.7,549.5L343.4,549.9L336.4,552.2L335.0,554.9L341.7,554.1L346.9,555.2L359.3,559.8L361.0,562.0L371.6,562.4L372.7,558.6L364.5,556.0L355.7,552.2ZM378.6,562.0L387.4,562.0L393.1,567.2L383.9,568.3L375.1,569.1L371.9,566.9ZM358.2,567.2L365.3,567.6L363.5,569.5L358.2,568.3ZM397.3,567.2L402.9,567.6L402.2,569.1L397.3,569.1ZM438.5,420.8L445.6,432.4L448.0,441.5L446.6,447.7L440.3,445.6L425.1,442.5L429.0,435.1L432.2,426.4ZM336.4,329.7L334.6,321.2L325.8,333.8L339.9,353.4ZM419.1,844.0L429.7,844.5L428.0,850.2L420.9,849.6ZM500.2,860.2L507.2,862.0L507.9,865.0L501.9,863.2ZM1211.6,705.4L1222.2,714.8L1218.7,712.9L1212.7,707.2ZM96.9,381.6L98.6,384.9L89.8,388.2L91.6,383.6ZM677.7,487.4L688.9,487.8L687.2,494.5L678.7,490.9ZM666.4,474.1L668.2,479.7L663.9,484.2L662.9,476.0ZM667.1,465.6L666.4,473.2L664.3,470.3ZM717.1,499.3L726.6,500.6L721.0,501.9L716.8,501.0ZM755.9,499.3L750.2,503.6L747.8,501.0ZM821.7,588.4L826.0,589.9L820.7,589.5ZM875.3,196.3L850.6,207.6L838.3,217.7L827.7,232.6L822.4,246.6L818.9,258.5L815.7,269.7L821.7,277.3L836.5,278.3L829.5,270.8L829.5,256.1L834.8,240.4L847.1,224.6L866.5,210.6L877.0,200.1ZM1118.3,207.6L1130.6,217.7L1150.0,224.6L1137.7,228.7L1120.1,221.9ZM1262.7,270.8L1269.8,266.4L1269.8,274.1L1266.2,274.1ZM-1.8,266.4L8.8,267.5L8.8,273.0L-1.8,274.1ZM191.8,258.9L194.9,240.5L198.0,232.8L208.8,231.2L221.1,237.4L227.2,243.5L218.0,252.8L211.8,263.5L202.6,269.7L194.9,268.2ZM216.5,263.5L219.5,252.8L228.8,249.7L239.5,254.3L250.3,252.8L258.0,245.1L267.2,242.0L274.9,249.7L278.0,268.2L276.5,285.1L267.2,292.8L251.8,295.8L236.5,297.4L227.2,294.3L222.6,285.1L228.8,277.4L219.5,272.8ZM273.4,249.7L285.7,238.9L294.9,243.5L296.5,258.9L290.3,269.7L281.1,265.1ZM298.0,237.4L313.4,235.8L314.9,248.2L305.7,254.3L299.5,249.7ZM318.0,249.7L325.7,240.5L341.1,240.5L359.5,248.2L378.0,263.5L393.4,277.4L408.8,298.9L418.0,315.8L413.4,331.2L401.1,342.0L390.3,351.2L370.3,342.0L359.5,329.7L370.3,318.9L378.0,308.2L362.6,295.8L350.3,289.7L339.5,283.5L327.2,274.3L319.5,265.1ZM221.1,206.6L239.5,203.5L250.3,202.0L261.1,214.3L256.5,228.2L238.0,231.2L224.2,225.1L222.6,214.3ZM201.1,206.6L208.8,192.8L224.2,186.6L228.8,198.9L219.5,209.7L207.2,212.8ZM230.3,180.5L241.1,166.6L248.8,171.2L247.2,185.1L236.5,189.7ZM264.2,200.5L278.0,197.4L287.2,208.2L285.7,223.5L273.4,223.5L265.7,212.8ZM262.6,155.8L276.5,154.3L285.7,169.7L288.8,182.0L279.5,185.1L270.3,177.4ZM288.8,165.1L301.1,166.6L305.7,185.1L296.5,188.2L290.3,180.5ZM293.4,194.3L305.7,194.3L313.4,206.6L310.3,228.2L298.0,228.2L294.9,212.8ZM308.8,200.5L331.8,198.9L347.2,209.7L354.9,222.0L347.2,229.7L324.2,229.7L311.8,222.0ZM313.5,102.0L333.6,85.7L346.3,69.3L370.0,63.8L406.3,74.8L419.1,85.7L406.3,114.8L388.1,140.3L370.0,158.4L362.7,180.3L359.0,200.3L319.0,202.1L311.7,187.6L295.4,169.4L293.5,136.6L304.4,114.8ZM672.0,146.0L697.0,136.0L714.0,132.0L730.0,139.0L726.0,153.0L714.0,157.0L719.0,181.0L709.0,190.0L697.0,174.0L691.0,202.0L683.0,181.0L672.0,157.0ZM794.0,129.0L815.0,122.0L836.0,104.0L857.0,104.0L864.0,118.0L857.0,139.0L836.0,143.0L815.0,139.0ZM954.0,118.0L972.0,115.0L986.0,146.0L1003.0,160.0L1010.0,174.0L996.0,178.0L979.0,164.0L958.0,146.0ZM1114.0,212.0L1130.0,203.0L1144.0,215.0L1139.0,228.0L1121.0,228.0ZM1148.0,216.0L1165.0,219.0L1169.0,230.0L1153.0,233.0Z" fill="none" stroke="#0b1a2e" stroke-width="10" filter="url(#b6)" opacity="0.38"/><path d="M416.8,95.7L431.5,88.3L460.8,76.1L475.5,61.4L495.1,52.8L524.5,49.1L541.6,56.5L544.1,63.8L561.2,76.1L563.7,88.3L573.5,98.1L588.2,103.0L593.1,112.8L583.3,129.9L568.6,147.1L566.1,169.1L568.6,203.4L561.2,240.1L553.9,264.6L556.3,279.3L544.1,284.2L529.4,291.5L517.2,301.3L495.1,320.9L487.8,340.5L480.4,365.0L465.7,355.2L458.4,333.2L451.0,301.3L438.8,252.4L424.1,213.2L402.1,205.8L389.8,193.6L380.0,176.5L384.9,169.1L402.1,159.3L407.0,139.7L399.6,134.8L407.0,125.0L419.2,115.3Z" fill="none" stroke="#0b1a2e" stroke-width="10" filter="url(#b6)" opacity="0.38"/>
<g clip-path="url(#landclip)">
<path d="M41.9,324.7L49.3,319.5L56.4,316.0L57.4,311.5L51.1,303.2L48.6,294.6L59.9,287.6L71.1,277.3L82.8,268.6L98.6,278.3L112.7,279.4L130.3,285.6L140.9,287.6L153.2,293.6L165.5,290.6L177.9,283.6L184.9,278.3L195.5,288.6L207.8,290.6L225.4,300.4L243.0,305.1L253.6,300.4L271.2,303.2L288.8,307.9L295.9,298.5L297.6,283.6L300.8,263.1L311.7,280.4L315.2,290.6L320.5,298.5L332.9,290.6L345.2,285.6L346.9,298.5L347.6,310.6L336.4,318.6L328.3,316.9L325.8,333.8L315.2,343.5L308.2,353.4L301.1,367.9L302.2,376.9L310.0,386.2L322.3,391.4L334.6,398.9L344.5,403.8L344.5,413.9L350.5,422.5L355.7,420.8L354.7,406.8L362.1,397.7L363.5,384.9L360.7,374.9L358.6,362.2L361.0,350.4L375.1,349.6L382.2,357.1L389.2,362.2L389.2,374.9L396.2,379.6L402.2,373.5L406.8,365.8L412.8,378.3L417.4,388.2L421.6,397.7L429.7,406.8L437.5,412.7L437.5,419.6L431.5,422.5L422.7,428.6L410.3,428.6L398.0,431.9L392.7,433.5L388.1,441.0L405.1,435.1L407.9,437.8L405.4,445.1L412.1,450.8L419.1,452.8L410.3,458.2L402.2,463.1L401.2,458.2L406.8,454.3L398.0,455.8L392.7,459.2L386.4,463.1L384.6,468.0L387.8,471.7L382.2,472.7L373.4,476.4L372.3,481.9L370.2,484.7L369.5,486.5L366.3,493.2L367.7,498.4L368.1,501.0L361.0,504.0L357.5,507.0L349.4,514.5L347.3,519.9L349.1,526.8L351.9,534.7L351.2,541.0L348.3,542.2L345.5,536.7L342.4,530.8L341.3,526.4L337.1,522.7L333.2,524.0L326.9,521.1L322.3,521.5L318.4,521.9L320.2,526.0L311.7,524.8L304.7,524.0L297.6,527.6L291.3,532.4L291.6,538.7L289.9,546.4L289.5,554.1L291.6,559.8L295.5,564.6L301.1,567.2L308.2,566.9L313.5,563.5L315.9,557.1L324.0,556.0L327.6,556.0L326.2,560.5L324.7,567.2L323.0,570.9L320.9,576.8L325.8,577.2L334.6,576.4L340.6,579.4L339.9,587.3L339.2,594.5L343.4,599.6L348.7,601.7L354.0,599.9L361.0,602.4L362.8,603.5L367.0,600.3L368.1,596.3L372.7,594.2L376.9,593.5L381.5,589.5L386.7,592.4L388.9,593.1L394.5,596.3L401.5,596.0L406.8,597.4L415.6,595.6L416.3,598.1L419.8,601.7L424.4,604.5L429.7,609.5L440.3,613.1L445.6,614.1L451.9,617.6L454.4,622.9L457.9,628.2L458.6,633.5L464.9,636.3L472.0,637.0L479.0,641.2L489.6,643.4L496.6,644.8L501.9,649.4L509.0,651.5L511.4,658.9L510.4,665.3L505.4,670.7L498.7,678.9L496.6,682.9L497.0,689.8L494.5,697.9L493.1,704.6L489.9,709.9L486.1,716.7L479.0,716.7L473.7,719.8L465.6,724.4L462.8,730.3L462.1,738.2L457.2,744.3L450.8,752.5L445.9,760.0L440.3,764.7L435.0,764.7L428.3,761.7L432.5,766.0L434.3,771.2L431.1,778.3L419.1,781.9L414.9,783.7L414.6,789.6L405.1,792.0L409.3,797.6L406.8,800.5L403.3,809.7L397.0,813.7L396.2,821.4L401.2,827.6L392.7,837.3L390.6,846.2L393.1,850.8L393.8,856.0L399.8,863.2L394.5,866.3L397.0,871.8L389.2,867.5L380.4,860.2L371.6,851.4L368.1,837.3L371.6,824.0L368.1,816.2L373.4,806.3L375.1,795.7L375.5,786.4L375.8,773.8L379.7,765.1L382.2,754.6L382.5,744.3L384.3,734.2L385.7,722.5L387.1,711.0L386.4,699.4L382.5,696.1L369.8,688.7L365.3,681.5L361.0,674.2L357.2,665.3L352.9,658.2L348.3,652.9L347.6,648.6L351.2,642.3L348.7,641.2L350.5,637.0L351.9,630.7L356.4,627.2L361.0,622.2L361.4,615.9L359.6,608.1L358.2,605.3L351.5,607.0L342.0,604.2L339.5,601.7L333.9,598.8L331.8,594.5L326.5,589.9L324.0,586.3L317.7,585.5L311.7,583.7L308.5,581.2L302.9,577.2L298.7,575.7L294.1,577.5L285.3,573.9L278.3,572.0L269.5,568.3L265.9,565.0L262.4,559.8L263.5,556.0L261.3,552.2L256.1,546.4L250.1,540.6L249.0,536.7L244.8,531.6L239.5,526.8L236.0,520.7L229.6,516.2L230.4,520.7L235.3,527.6L238.8,533.6L242.0,539.5L245.1,545.3L246.9,550.7L245.5,548.4L239.2,544.5L238.8,539.5L232.5,534.7L232.1,530.8L228.2,524.8L225.4,520.3L221.5,512.4L217.3,507.4L214.2,505.7L209.2,504.0L207.1,499.3L204.6,494.0L202.5,489.6L198.3,484.7L195.8,477.8L196.2,470.3L196.9,460.7L197.2,449.7L194.8,438.3L184.9,429.7L181.7,425.3L177.9,412.7L174.4,403.8L163.8,391.4L152.2,380.3L146.2,374.9L133.8,367.9L121.5,365.1L114.5,361.5L107.4,368.6L99.3,372.8L100.4,364.4L105.7,359.3L95.1,367.9L92.3,374.9L89.8,381.6L82.8,388.2L75.7,394.5L65.2,400.7L53.5,403.2L61.6,398.9L74.0,391.4L78.9,384.9L81.0,376.9L74.0,376.9L64.1,376.2L61.6,367.9L52.8,362.2L52.1,353.4L57.1,344.2L66.9,337.9L61.6,333.8L51.1,333.8L47.6,327.2ZM614.3,497.5L611.8,495.4L607.9,492.3L602.7,493.2L600.5,485.6L602.7,479.7L602.7,470.8L601.2,465.6L606.5,462.2L614.6,463.6L623.4,463.6L627.7,464.1L629.8,457.8L629.1,449.2L625.2,444.1L619.2,441.5L617.1,437.8L623.4,436.2L628.4,437.3L627.3,431.3L634.7,432.4L638.9,429.7L642.1,424.2L646.3,421.9L648.4,418.5L650.9,412.7L655.1,410.4L662.2,409.2L665.3,406.8L664.3,400.7L662.5,390.7L664.3,387.5L671.3,383.6L670.3,391.4L669.2,397.7L669.9,403.8L677.0,405.6L684.0,406.8L690.4,405.6L698.5,402.0L703.0,404.4L708.0,400.7L708.0,394.5L709.7,386.2L713.6,384.9L719.2,388.2L717.1,378.9L719.6,372.1L727.3,371.4L737.9,368.6L729.1,364.4L722.1,366.5L709.4,362.2L708.7,349.6L714.0,339.5L722.8,331.4L722.1,323.0L712.9,324.7L708.7,333.8L702.7,341.9L697.0,348.1L694.6,357.1L695.6,364.4L700.6,371.4L696.7,376.2L692.8,384.9L690.4,393.3L683.7,398.3L678.7,394.5L675.9,384.9L673.4,375.6L671.0,372.8L666.8,376.9L660.4,381.6L654.1,378.3L652.7,371.4L651.3,360.8L652.7,351.2L658.7,345.8L667.5,337.9L677.0,325.5L684.7,309.7L688.6,298.5L697.4,288.6L707.3,280.4L724.9,273.0L734.4,277.3L743.2,283.6L751.3,290.6L769.6,299.4L778.4,316.9L771.4,321.2L752.0,315.1L756.6,329.7L764.3,336.3L774.9,333.0L787.9,320.4L789.7,305.1L796.0,298.5L802.4,306.0L822.4,301.3L827.7,295.6L840.0,298.5L846.4,293.6L847.1,285.6L861.2,295.6L866.5,291.6L870.0,298.5L869.3,283.6L878.8,253.8L889.4,267.5L892.9,298.5L887.6,316.0L892.9,278.3L897.5,257.3L905.2,267.5L914.0,259.6L918.2,253.8L917.5,241.6L936.9,237.8L944.0,217.7L965.1,207.6L989.7,195.5L1001.4,184.2L1014.4,206.2L1032.0,224.6L1028.5,241.6L1049.6,244.1L1069.3,251.4L1081.3,242.9L1090.1,259.6L1113.0,273.0L1128.9,260.8L1144.7,257.3L1162.3,261.9L1172.9,274.1L1192.3,276.2L1201.1,286.6L1225.0,287.6L1234.5,283.6L1261.0,293.6L1269.8,294.6L1269.8,329.7L1259.2,332.2L1264.5,349.6L1246.9,357.1L1234.5,367.9L1218.7,368.6L1213.4,364.4L1208.1,371.4L1208.8,382.9L1207.4,394.5L1204.6,403.8L1192.6,415.6L1185.9,424.2L1183.5,415.6L1182.4,400.7L1186.3,384.9L1197.6,373.5L1199.3,360.8L1211.6,349.6L1197.6,355.6L1178.2,369.3L1162.3,373.5L1137.7,372.8L1120.1,386.9L1111.3,400.7L1128.9,408.6L1131.3,412.7L1128.9,424.2L1127.1,440.4L1118.3,453.3L1098.9,465.6L1094.7,467.5L1090.8,475.0L1084.8,479.7L1087.7,488.7L1090.1,498.4L1086.6,501.9L1079.2,504.0L1079.9,497.5L1078.5,490.1L1074.3,485.6L1071.5,480.6L1062.0,475.5L1054.9,479.7L1048.9,484.2L1052.8,488.7L1062.0,491.4L1065.8,491.4L1057.7,497.5L1054.2,501.9L1057.7,508.2L1063.0,514.5L1063.4,518.6L1064.1,522.7L1060.2,530.8L1055.3,538.7L1050.3,544.5L1044.3,550.3L1036.2,553.0L1028.5,554.9L1021.4,556.0L1022.5,560.5L1016.2,556.0L1009.1,559.8L1006.3,565.4L1011.2,572.8L1017.6,580.1L1019.0,589.2L1013.7,596.3L1004.5,601.7L1003.1,603.1L1002.1,597.1L996.8,592.4L992.6,588.8L989.4,585.9L985.9,588.8L983.4,596.3L987.3,603.5L991.5,609.5L997.8,614.1L998.2,621.2L1001.0,628.6L991.5,624.7L988.3,619.4L986.6,610.6L980.6,605.3L980.9,598.1L981.3,589.2L978.1,580.1L977.8,574.6L968.6,575.3L966.5,569.1L961.6,561.6L958.0,556.0L952.8,552.2L947.5,554.9L940.4,556.0L938.7,560.9L927.4,569.8L918.6,577.2L916.8,585.5L915.1,597.1L907.0,604.9L902.4,598.1L897.5,588.1L893.9,578.3L890.4,565.7L889.7,557.9L889.4,553.0L880.6,557.9L877.0,552.2L874.2,547.6L868.9,543.4L855.9,541.4L851.0,541.8L835.8,541.0L833.0,534.7L822.4,533.2L813.6,527.6L808.3,522.7L803.1,524.8L804.8,528.8L808.7,534.7L811.9,540.6L815.4,538.7L816.5,545.7L826.0,545.3L831.2,539.5L832.7,537.1L834.1,544.5L840.4,548.0L844.6,552.2L840.0,559.8L833.4,567.2L829.5,570.9L820.7,574.2L817.2,578.3L804.8,583.0L793.6,587.3L787.2,588.8L785.1,581.9L783.7,572.8L776.7,561.6L771.7,552.2L765.4,542.6L759.0,532.8L756.9,524.8L754.8,517.8L757.3,511.2L760.1,504.0L760.4,495.4L755.9,494.0L750.2,496.7L741.4,496.7L732.6,494.0L729.8,490.9L727.0,486.5L726.3,481.9L727.3,478.3L722.1,475.5L717.8,478.3L713.6,479.7L718.5,487.8L718.5,490.1L713.2,487.4L713.2,495.4L710.1,493.2L708.7,487.4L705.1,481.9L702.3,475.5L699.2,468.0L691.4,463.1L683.3,456.8L682.6,452.8L677.3,453.8L678.4,460.7L684.0,468.0L690.7,470.8L694.9,475.0L699.2,479.7L694.6,477.8L694.2,484.2L688.9,489.2L689.7,481.9L685.1,476.9L681.5,474.1L673.4,468.4L669.9,461.7L665.0,458.7L659.7,462.2L653.4,464.6L646.3,463.6L645.3,468.4L640.3,474.1L636.5,477.4L633.6,484.2L631.5,488.7L628.7,490.9L625.2,494.5L618.2,494.5ZM-1.8,294.6L10.6,303.2L24.7,312.4L36.3,320.4L29.9,325.5L24.7,334.7L10.6,327.2L-1.8,329.7ZM613.2,498.4L625.2,501.0L632.2,498.8L639.3,495.4L651.6,493.6L663.9,493.2L669.2,491.8L673.1,494.0L672.7,499.7L669.6,506.1L674.5,510.3L681.5,511.2L687.9,513.3L695.6,518.6L700.9,521.5L704.4,515.3L711.5,511.2L716.8,512.4L723.8,515.3L732.6,516.6L741.4,518.6L746.7,516.6L752.0,518.2L754.8,517.8L756.9,524.8L754.8,531.6L748.5,523.1L751.3,530.8L756.2,540.6L764.0,554.1L765.7,563.5L769.6,570.9L774.2,578.3L778.4,583.7L786.2,588.8L786.2,592.8L794.3,596.3L805.9,593.8L814.3,591.7L813.6,598.1L808.7,607.0L802.4,617.6L794.3,626.5L783.7,633.5L778.4,640.5L773.1,649.4L772.8,658.2L775.9,670.7L777.4,686.9L770.7,694.2L756.6,704.6L759.0,712.9L758.0,722.5L749.5,727.9L747.8,738.2L740.7,748.4L731.9,756.7L723.8,760.9L704.4,764.3L699.2,762.1L698.1,754.6L692.1,740.2L687.2,730.3L685.1,716.3L676.3,699.8L676.3,688.7L681.9,677.8L680.1,665.3L677.3,654.7L672.7,647.6L666.8,638.8L667.1,630.0L666.4,620.1L658.7,618.4L655.1,618.4L646.0,610.9L638.2,611.6L627.0,615.9L616.4,617.6L607.6,617.6L598.8,612.3L588.2,607.0L585.4,599.9L580.1,594.5L574.8,589.2L572.4,581.2L576.6,574.6L576.6,563.5L573.8,557.9L578.3,546.4L582.9,537.9L588.6,531.2L594.6,528.8L599.5,520.7L602.3,512.4L607.6,507.8L611.8,501.9ZM807.6,676.0L810.8,688.7L809.4,694.2L804.8,707.2L799.9,724.4L793.2,726.0L786.5,712.9L789.0,697.9L796.0,689.8L803.1,681.5ZM577.6,316.9L586.5,325.5L582.9,333.8L567.1,342.7L554.0,339.5L549.5,331.4L547.7,325.5L553.0,316.9L563.6,319.5ZM623.4,377.6L627.7,384.2L625.2,394.5L628.7,400.7L634.4,409.8L640.0,413.9L638.9,421.4L638.9,423.6L635.1,425.3L627.0,426.4L613.9,429.1L616.4,420.8L621.7,420.8L616.0,418.5L617.8,411.6L623.4,410.4L621.3,403.8L616.4,400.7L613.9,393.3L613.6,384.9L616.4,377.6ZM608.3,398.9L614.6,403.8L612.9,411.0L611.5,417.4L600.5,421.4L597.7,416.8L598.1,409.8L604.1,405.0L604.4,399.5ZM1136.3,405.0L1138.4,418.5L1139.4,435.1L1139.4,445.6L1134.2,450.8L1134.2,437.8L1134.2,424.2L1132.4,409.8ZM1133.8,453.3L1145.8,460.7L1146.5,465.6L1138.7,470.3L1127.1,472.7L1128.2,464.6L1133.1,458.2ZM1132.0,472.7L1134.2,480.6L1130.6,487.8L1129.9,494.0L1128.2,501.4L1121.8,503.1L1115.8,504.0L1112.3,508.2L1106.7,509.1L1100.7,511.2L1096.1,518.6L1092.6,518.6L1090.5,512.4L1091.9,507.8L1095.4,504.9L1102.5,499.7L1114.8,495.4L1117.2,490.9L1124.3,489.2L1126.8,479.7L1128.2,474.1ZM1062.0,541.4L1062.3,546.4L1059.5,554.1L1057.0,550.3L1058.8,544.5ZM1023.2,561.3L1025.0,563.5L1019.7,568.3L1016.5,564.6L1019.7,561.6ZM1059.5,567.2L1064.4,567.2L1062.3,576.4L1070.8,583.7L1070.8,587.3L1059.1,584.5L1056.0,576.4ZM1076.0,598.8L1079.6,608.8L1075.3,612.3L1063.7,608.8L1069.0,603.5ZM1074.3,589.2L1076.7,594.5L1074.3,598.1L1067.2,599.9L1063.7,596.3L1063.7,591.7ZM1054.9,593.1L1053.8,598.1L1046.8,603.8L1047.2,601.7ZM1045.4,608.8L1053.8,615.9L1048.9,622.9L1052.8,630.0L1047.9,637.0L1042.6,645.8L1037.3,647.6L1026.7,644.1L1022.1,643.7L1019.7,637.0L1017.9,628.2L1025.0,626.5L1032.0,622.9L1039.1,617.3L1042.6,612.3ZM969.7,613.8L980.2,619.4L989.0,626.5L998.5,631.7L1002.1,638.8L1007.4,644.1L1006.7,654.3L1002.1,652.9L994.3,647.6L989.0,640.5L983.8,633.5L977.4,624.7L971.4,617.6ZM1007.7,654.3L1023.2,657.8L1031.3,657.8L1037.3,661.0L1036.9,664.2L1025.0,662.5L1009.1,660.0L1004.9,657.5ZM1039.8,662.5L1053.1,662.8L1067.2,662.5L1082.4,662.8L1076.0,665.3L1069.0,669.9L1056.7,667.1L1044.3,664.9ZM1074.3,628.9L1058.4,631.7L1062.0,637.0L1067.9,638.8L1063.0,637.7L1067.2,649.4L1058.4,652.9L1054.6,652.9L1052.4,645.8L1056.0,637.0L1057.4,630.7L1070.8,630.0ZM1084.8,626.5L1086.6,631.7L1084.1,636.3L1083.1,630.0ZM1084.8,643.4L1094.7,644.1L1093.7,646.2L1084.5,645.5ZM1096.1,636.3L1106.0,638.8L1118.3,642.3L1130.6,642.7L1143.0,647.6L1150.0,652.9L1154.6,656.4L1155.3,661.7L1164.1,669.6L1160.6,670.7L1150.0,663.5L1143.0,660.0L1137.7,665.3L1130.6,665.7L1121.8,661.7L1121.1,656.4L1113.0,649.4L1102.5,647.6L1098.9,644.1L1097.2,642.3L1095.4,638.8L1097.2,635.3ZM1167.6,648.3L1170.4,651.1L1162.3,655.4L1157.0,652.9ZM1135.9,671.4L1139.8,683.3L1145.8,686.9L1148.6,694.2L1153.5,702.7L1159.9,709.1L1164.4,714.8L1171.1,722.5L1173.3,732.3L1174.7,740.2L1171.1,752.5L1166.6,760.9L1162.7,769.5L1162.0,776.1L1149.3,780.5L1144.0,777.4L1132.4,780.1L1127.1,773.8L1120.1,767.3L1119.4,756.7L1111.6,764.7L1106.0,754.6L1095.4,750.4L1084.8,751.2L1074.3,753.7L1067.2,760.4L1056.7,760.9L1048.9,765.1L1039.1,762.1L1041.5,752.5L1039.1,744.3L1035.9,734.2L1033.8,728.3L1033.4,720.6L1035.9,712.9L1044.3,709.1L1052.4,706.5L1061.2,701.6L1064.8,694.2L1069.0,691.7L1074.3,686.9L1081.3,683.3L1090.1,686.9L1091.9,679.7L1097.2,677.1L1098.9,673.5L1109.5,676.0L1115.8,677.8L1111.3,686.9L1128.9,696.1L1132.4,686.9L1132.7,677.8ZM1143.7,791.0L1156.3,792.0L1154.9,801.4L1151.1,804.3L1145.4,796.7ZM1242.3,762.6L1252.2,771.6L1262.7,776.1L1257.4,785.1L1251.1,794.3L1246.2,789.6L1246.2,784.1L1248.6,773.8ZM1242.3,789.6L1247.9,794.3L1243.3,803.9L1235.6,816.2L1227.5,819.3L1220.5,813.7L1232.1,803.9L1239.8,794.3ZM916.5,598.8L920.4,603.5L922.1,610.6L917.5,612.7L915.1,607.0ZM348.7,549.5L343.4,549.9L336.4,552.2L335.0,554.9L341.7,554.1L346.9,555.2L359.3,559.8L361.0,562.0L371.6,562.4L372.7,558.6L364.5,556.0L355.7,552.2ZM378.6,562.0L387.4,562.0L393.1,567.2L383.9,568.3L375.1,569.1L371.9,566.9ZM358.2,567.2L365.3,567.6L363.5,569.5L358.2,568.3ZM397.3,567.2L402.9,567.6L402.2,569.1L397.3,569.1ZM438.5,420.8L445.6,432.4L448.0,441.5L446.6,447.7L440.3,445.6L425.1,442.5L429.0,435.1L432.2,426.4ZM336.4,329.7L334.6,321.2L325.8,333.8L339.9,353.4ZM419.1,844.0L429.7,844.5L428.0,850.2L420.9,849.6ZM500.2,860.2L507.2,862.0L507.9,865.0L501.9,863.2ZM1211.6,705.4L1222.2,714.8L1218.7,712.9L1212.7,707.2ZM96.9,381.6L98.6,384.9L89.8,388.2L91.6,383.6ZM677.7,487.4L688.9,487.8L687.2,494.5L678.7,490.9ZM666.4,474.1L668.2,479.7L663.9,484.2L662.9,476.0ZM667.1,465.6L666.4,473.2L664.3,470.3ZM717.1,499.3L726.6,500.6L721.0,501.9L716.8,501.0ZM755.9,499.3L750.2,503.6L747.8,501.0ZM821.7,588.4L826.0,589.9L820.7,589.5ZM875.3,196.3L850.6,207.6L838.3,217.7L827.7,232.6L822.4,246.6L818.9,258.5L815.7,269.7L821.7,277.3L836.5,278.3L829.5,270.8L829.5,256.1L834.8,240.4L847.1,224.6L866.5,210.6L877.0,200.1ZM1118.3,207.6L1130.6,217.7L1150.0,224.6L1137.7,228.7L1120.1,221.9ZM1262.7,270.8L1269.8,266.4L1269.8,274.1L1266.2,274.1ZM-1.8,266.4L8.8,267.5L8.8,273.0L-1.8,274.1ZM191.8,258.9L194.9,240.5L198.0,232.8L208.8,231.2L221.1,237.4L227.2,243.5L218.0,252.8L211.8,263.5L202.6,269.7L194.9,268.2ZM216.5,263.5L219.5,252.8L228.8,249.7L239.5,254.3L250.3,252.8L258.0,245.1L267.2,242.0L274.9,249.7L278.0,268.2L276.5,285.1L267.2,292.8L251.8,295.8L236.5,297.4L227.2,294.3L222.6,285.1L228.8,277.4L219.5,272.8ZM273.4,249.7L285.7,238.9L294.9,243.5L296.5,258.9L290.3,269.7L281.1,265.1ZM298.0,237.4L313.4,235.8L314.9,248.2L305.7,254.3L299.5,249.7ZM318.0,249.7L325.7,240.5L341.1,240.5L359.5,248.2L378.0,263.5L393.4,277.4L408.8,298.9L418.0,315.8L413.4,331.2L401.1,342.0L390.3,351.2L370.3,342.0L359.5,329.7L370.3,318.9L378.0,308.2L362.6,295.8L350.3,289.7L339.5,283.5L327.2,274.3L319.5,265.1ZM221.1,206.6L239.5,203.5L250.3,202.0L261.1,214.3L256.5,228.2L238.0,231.2L224.2,225.1L222.6,214.3ZM201.1,206.6L208.8,192.8L224.2,186.6L228.8,198.9L219.5,209.7L207.2,212.8ZM230.3,180.5L241.1,166.6L248.8,171.2L247.2,185.1L236.5,189.7ZM264.2,200.5L278.0,197.4L287.2,208.2L285.7,223.5L273.4,223.5L265.7,212.8ZM262.6,155.8L276.5,154.3L285.7,169.7L288.8,182.0L279.5,185.1L270.3,177.4ZM288.8,165.1L301.1,166.6L305.7,185.1L296.5,188.2L290.3,180.5ZM293.4,194.3L305.7,194.3L313.4,206.6L310.3,228.2L298.0,228.2L294.9,212.8ZM308.8,200.5L331.8,198.9L347.2,209.7L354.9,222.0L347.2,229.7L324.2,229.7L311.8,222.0ZM313.5,102.0L333.6,85.7L346.3,69.3L370.0,63.8L406.3,74.8L419.1,85.7L406.3,114.8L388.1,140.3L370.0,158.4L362.7,180.3L359.0,200.3L319.0,202.1L311.7,187.6L295.4,169.4L293.5,136.6L304.4,114.8ZM672.0,146.0L697.0,136.0L714.0,132.0L730.0,139.0L726.0,153.0L714.0,157.0L719.0,181.0L709.0,190.0L697.0,174.0L691.0,202.0L683.0,181.0L672.0,157.0ZM794.0,129.0L815.0,122.0L836.0,104.0L857.0,104.0L864.0,118.0L857.0,139.0L836.0,143.0L815.0,139.0ZM954.0,118.0L972.0,115.0L986.0,146.0L1003.0,160.0L1010.0,174.0L996.0,178.0L979.0,164.0L958.0,146.0ZM1114.0,212.0L1130.0,203.0L1144.0,215.0L1139.0,228.0L1121.0,228.0ZM1148.0,216.0L1165.0,219.0L1169.0,230.0L1153.0,233.0Z" fill="#445a2c"/>
<path d="M35.2,224.6L440.3,224.6L440.3,429.7L387.4,445.6L299.4,440.4L228.9,429.7L176.1,400.7L105.7,367.9L35.2,400.7Z" fill="#444a2a" opacity="1" filter="url(#b10)"/><path d="M204.3,273.0L408.6,273.0L408.6,353.4L352.2,353.4L299.4,367.9L264.2,337.9L225.4,321.2L197.2,293.6Z" fill="#5e5434" opacity="0.45" filter="url(#b14)"/><path d="M42.3,267.5L123.3,267.5L112.7,312.4L88.1,345.8L70.4,381.6L42.3,367.9L42.3,321.2Z" fill="#625a3a" opacity="0.8" filter="url(#b10)"/><path d="M359.3,353.4L415.6,360.8L436.8,418.5L401.5,429.7L373.4,412.7L362.8,388.2Z" fill="#5a5236" opacity="0.6" filter="url(#b12)"/><path d="M176.1,38.9L429.7,38.9L422.7,237.8L380.4,261.9L401.5,283.6L422.7,321.2L412.1,353.4L359.3,353.4L352.2,303.2L299.4,283.6L239.5,303.2L193.7,283.6Z" fill="#a0906a" opacity="1" filter="url(#b3)"/><path d="M292.3,440.4L387.4,445.6L401.5,465.6L373.4,501.9L352.2,542.6L306.4,526.8L288.8,522.7Z" fill="#40562a" opacity="1" filter="url(#b10)"/><path d="M232.5,418.5L281.8,418.5L288.8,450.8L246.6,450.8Z" fill="#4a7030" opacity="0.5" filter="url(#b12)"/><path d="M239.5,435.1L278.3,440.4L288.8,479.7L295.9,514.5L288.8,538.7L267.7,530.8L260.6,479.7Z" fill="#8a7e48" opacity="0.8" filter="url(#b12)"/><path d="M207.8,435.1L239.5,445.6L267.7,475.0L281.8,506.1L285.3,526.8L285.3,554.1L267.7,561.6L253.6,546.4L236.0,518.6L216.6,506.1L200.8,479.7Z" fill="#a88a58" opacity="1" filter="url(#b7)"/><path d="M214.9,470.3L239.5,479.7L246.6,501.9L257.1,518.6L260.6,530.8L232.5,522.7L221.9,501.9Z" fill="#c4a470" opacity="0.7" filter="url(#b10)"/><path d="M221.9,514.5L246.6,518.6L257.1,538.7L246.6,552.2L230.7,534.7Z" fill="#b49868" opacity="0.8" filter="url(#b6)"/><path d="M281.8,554.1L327.6,557.9L341.7,583.7L362.8,605.3L345.2,605.3L299.4,580.1L267.7,565.4Z" fill="#40602c" opacity="0.9" filter="url(#b8)"/><path d="M95.1,357.1L112.7,349.6L137.4,357.1L155.0,365.8L162.0,378.3L144.4,371.4L119.8,363.7L98.6,364.4Z" fill="#e8e8e4" opacity="0.8" filter="url(#b4)"/><path d="M155.0,374.9L176.1,394.5L190.2,418.5L200.8,429.7L207.8,424.2L186.7,400.7L165.5,381.6Z" fill="#d8d8d0" opacity="0.55" filter="url(#b5)"/><path d="M98.6,367.9L147.9,374.9L172.6,400.7L193.7,429.7L204.3,435.1L197.2,424.2L165.5,394.5L140.9,371.4L112.7,364.4Z" fill="#e8e8e0" opacity="0.6" filter="url(#b3)"/><path d="M369.8,591.0L422.7,605.3L450.8,619.4L464.9,640.5L440.3,661.7L415.6,683.3L391.0,690.6L366.3,668.9L359.3,633.5L362.8,605.3Z" fill="#30501f" opacity="1" filter="url(#b12)"/><path d="M472.0,640.5L510.7,651.1L500.2,686.9L486.1,712.9L461.4,728.3L450.8,712.9L450.8,683.3L475.5,654.7Z" fill="#5e6a38" opacity="0.85" filter="url(#b14)"/><path d="M486.1,644.1L507.2,654.7L496.6,676.0L479.0,683.3L472.0,668.9Z" fill="#b07a48" opacity="0.55" filter="url(#b10)"/><path d="M348.7,651.1L383.9,697.9L398.0,736.2L394.5,787.3L394.5,848.5L394.5,872.5L380.4,866.3L366.3,816.2L376.9,765.1L383.9,712.9L362.8,676.0Z" fill="#a08658" opacity="0.9" filter="url(#b6)"/><path d="M391.0,769.5L415.6,778.3L408.6,796.7L401.5,826.6L391.0,848.5L376.9,837.3L380.4,796.7Z" fill="#a88c58" opacity="0.9" filter="url(#b8)"/><path d="M415.6,712.9L457.9,712.9L457.9,744.3L436.8,765.1L422.7,769.5L408.6,744.3Z" fill="#50683a" opacity="0.7" filter="url(#b12)"/><path d="M375.1,796.7L369.8,837.3L383.9,866.3L376.9,848.5L373.4,816.2Z" fill="#e0e0dc" opacity="0.6" filter="url(#b3)"/><path d="M598.8,367.9L792.5,367.9L792.5,455.8L722.1,479.7L598.8,497.5Z" fill="#46582c" opacity="1" filter="url(#b12)"/><path d="M602.3,463.1L644.6,468.0L632.2,493.2L612.9,496.2L602.3,493.2Z" fill="#b48c58" opacity="1" filter="url(#b6)"/><path d="M693.9,443.0L711.5,440.4L711.5,455.8L697.4,455.8Z" fill="#a08a58" opacity="0.5" filter="url(#b6)"/><path d="M774.9,283.6L1268.0,261.9L1268.0,429.7L1091.9,440.4L951.0,429.7L845.3,400.7L792.5,381.6Z" fill="#4c4c2e" opacity="1" filter="url(#b14)"/><path d="M845.3,142.2L1268.0,142.2L1268.0,321.2L1197.6,353.4L1074.3,321.2L1003.8,283.6L915.8,283.6L845.3,303.2Z" fill="#5e4e2c" opacity="0.85" filter="url(#b16)"/><path d="M1003.8,321.2L1063.7,353.4L1127.1,367.9L1197.6,353.4L1268.0,321.2L1268.0,261.9L1091.9,261.9Z" fill="#6a5432" opacity="0.45" filter="url(#b18)"/><path d="M739.7,367.9L951.0,353.4L986.2,418.5L898.2,429.7L792.5,418.5Z" fill="#425a2a" opacity="0.6" filter="url(#b14)"/><path d="M704.4,283.6L690.4,303.2L658.7,353.4L658.7,371.4L665.7,360.8L686.8,321.2Z" fill="#c8c8bc" opacity="0.45" filter="url(#b5)"/><path d="M725.6,472.7L789.0,472.7L789.0,495.4L729.1,495.4Z" fill="#b49462" opacity="1" filter="url(#b6)"/><path d="M810.1,412.7L898.2,418.5L933.4,435.1L922.8,460.7L873.5,470.3L827.7,475.0L810.1,455.8Z" fill="#a08848" opacity="0.95" filter="url(#b12)"/><path d="M817.2,450.8L852.4,455.8L866.5,470.3L852.4,488.7L824.2,488.7Z" fill="#c8ac68" opacity="0.75" filter="url(#b10)"/><path d="M792.5,470.3L880.6,470.3L898.2,506.1L873.5,542.6L834.8,542.6L803.1,522.7L789.0,497.5Z" fill="#d2b87c" opacity="0.95" filter="url(#b10)"/><path d="M760.8,493.2L789.0,479.7L796.0,501.9L774.9,514.5Z" fill="#c6a870" opacity="0.8" filter="url(#b8)"/><path d="M760.8,514.5L803.1,522.7L831.2,546.4L831.2,569.1L792.5,587.3L771.4,561.6L757.3,530.8Z" fill="#e8d090" opacity="1" filter="url(#b8)"/><path d="M785.5,576.4L803.1,583.7L827.7,572.8L843.6,554.1L838.3,548.4Z" fill="#d0a068" opacity="0.5" filter="url(#b8)"/><path d="M944.0,429.7L1014.4,429.7L1063.7,455.8L1049.6,479.7L1003.8,488.7L958.0,470.3L936.9,450.8Z" fill="#d4bc80" opacity="0.95" filter="url(#b12)"/><path d="M972.1,465.6L1028.5,455.8L1042.6,475.0L1000.3,488.7L972.1,479.7Z" fill="#e0cc94" opacity="0.6" filter="url(#b10)"/><path d="M901.7,470.3L944.0,468.0L958.0,479.7L944.0,493.2L908.7,495.4Z" fill="#e6d6a0" opacity="0.95" filter="url(#b7)"/><path d="M894.6,497.5L944.0,493.2L986.2,501.9L989.7,518.6L972.1,530.8L936.9,530.8L912.3,522.7L894.6,510.3Z" fill="#c4a878" opacity="0.95" filter="url(#b8)"/><path d="M880.6,460.7L929.9,460.7L922.8,475.0L887.6,479.7Z" fill="#98884e" opacity="0.6" filter="url(#b6)"/><path d="M891.1,499.7L908.7,514.5L919.3,522.7L933.4,528.8L951.0,531.6L965.1,528.8L972.1,524.8L961.6,526.8L944.0,526.8L926.3,520.7L908.7,508.2L898.2,497.5Z" fill="#ece8e0" opacity="0.75" filter="url(#b3)"/><path d="M873.5,522.7L908.7,522.7L929.9,546.4L936.9,561.6L919.3,580.1L907.0,605.3L892.9,576.4L880.6,554.1L870.0,542.6Z" fill="#9a8450" opacity="0.9" filter="url(#b10)"/><path d="M877.0,526.8L894.6,534.7L894.6,554.1L870.0,546.4Z" fill="#b8985c" opacity="0.7" filter="url(#b8)"/><path d="M901.7,518.6L929.9,530.8L958.0,534.7L958.0,554.1L940.4,554.1L922.8,542.6Z" fill="#4e6e32" opacity="0.8" filter="url(#b8)"/><path d="M891.1,569.1L903.5,598.1L905.2,603.5L896.4,591.0Z" fill="#5a7438" opacity="0.6" filter="url(#b4)"/><path d="M1028.5,488.7L1063.7,475.0L1084.8,479.7L1063.7,522.7L1035.5,554.1L1000.3,554.1L993.3,522.7L1003.8,506.1Z" fill="#465c2e" opacity="0.9" filter="url(#b10)"/><path d="M958.0,530.8L1014.4,554.1L1014.4,598.1L1000.3,633.5L975.7,612.3L958.0,561.6Z" fill="#34522a" opacity="0.9" filter="url(#b12)"/><path d="M598.8,497.5L676.3,501.9L746.7,514.5L767.8,554.1L760.8,580.1L704.4,583.7L616.4,580.1L574.1,572.8L584.7,530.8Z" fill="#ead496" opacity="1" filter="url(#b9)"/><path d="M612.9,518.6L711.5,522.7L743.2,538.7L732.6,565.4L669.2,572.8L616.4,565.4L588.2,546.4Z" fill="#f4e8bc" opacity="0.8" filter="url(#b14)"/><path d="M574.1,580.1L767.8,580.1L774.9,594.5L739.7,598.1L634.0,598.1L577.6,594.5Z" fill="#a09250" opacity="0.85" filter="url(#b8)"/><path d="M574.1,591.0L634.0,594.5L739.7,598.1L774.9,605.3L774.9,615.9L704.4,612.3L634.0,608.8L588.2,605.3Z" fill="#4e6e30" opacity="0.8" filter="url(#b9)"/><path d="M665.7,612.3L732.6,615.9L743.2,626.5L736.1,647.6L711.5,658.2L683.3,654.7L665.7,633.5Z" fill="#34582a" opacity="0.9" filter="url(#b10)"/><path d="M676.3,654.7L757.3,651.1L767.8,686.9L739.7,697.9L683.3,690.6Z" fill="#46622e" opacity="0.8" filter="url(#b12)"/><path d="M774.9,591.0L813.6,594.5L796.0,622.9L774.9,647.6L760.8,644.1L764.3,612.3Z" fill="#c07040" opacity="0.85" filter="url(#b8)"/><path d="M676.3,683.3L711.5,694.2L736.1,705.4L750.2,720.6L739.7,744.3L725.6,760.9L704.4,765.1L690.4,744.3L679.8,712.9Z" fill="#c0904c" opacity="0.95" filter="url(#b9)"/><path d="M679.8,705.4L704.4,720.6L718.5,744.3L697.4,752.5Z" fill="#d0a050" opacity="0.6" filter="url(#b10)"/><path d="M785.5,683.3L789.0,728.3L799.5,724.4L801.3,697.9L804.8,679.7Z" fill="#b08450" opacity="0.85" filter="url(#b5)"/><path d="M806.6,679.7L808.3,697.9L803.1,720.6L800.2,724.4L805.2,690.6Z" fill="#567038" opacity="0.7" filter="url(#b4)"/><path d="M1021.4,668.9L1179.9,668.9L1179.9,780.5L1021.4,780.5Z" fill="#b89050" opacity="1" filter="url(#b4)"/><path d="M1063.7,679.7L1098.9,672.5L1116.5,683.3L1123.6,705.4L1130.6,728.3L1123.6,748.4L1106.0,756.7L1042.6,765.1L1028.5,736.2L1032.0,709.1L1060.2,694.2Z" fill="#c85c24" opacity="1" filter="url(#b9)"/><path d="M1063.7,705.4L1102.5,712.9L1113.0,736.2L1077.8,744.3L1049.6,728.3Z" fill="#d06428" opacity="0.6" filter="url(#b10)"/><path d="M1127.1,712.9L1151.8,720.6L1155.3,744.3L1137.7,769.5L1123.6,752.5Z" fill="#c07840" opacity="0.9" filter="url(#b9)"/><path d="M1114.8,728.3L1125.3,732.3L1125.3,746.3L1114.8,744.3Z" fill="#e2cf98" opacity="0.8" filter="url(#b6)"/><path d="M1135.9,676.0L1144.7,690.6L1158.8,712.9L1165.9,728.3L1151.8,720.6L1141.2,701.6L1137.7,686.9Z" fill="#587638" opacity="0.85" filter="url(#b7)"/><path d="M1165.9,728.3L1174.7,744.3L1165.9,760.9L1151.8,778.3L1141.2,780.5L1158.8,765.1L1162.3,744.3Z" fill="#8c8c48" opacity="0.8" filter="url(#b6)"/><path d="M1039.1,748.4L1039.1,765.1L1053.1,765.1L1049.6,752.5Z" fill="#a89a58" opacity="0.7" filter="url(#b6)"/><path d="M1095.4,676.0L1113.0,674.2L1113.0,683.3L1095.4,686.9Z" fill="#7a8848" opacity="0.5" filter="url(#b7)"/><path d="M968.6,605.3L1091.9,605.3L1169.4,668.9L1003.8,668.9Z" fill="#34542a" opacity="1" filter="url(#b6)"/><path d="M662.2,109.3L746.7,109.3L746.7,217.7L662.2,217.7Z" fill="#f2f2f0" opacity="1" filter="url(#b2)"/><path d="M767.8,84.0L887.6,84.0L887.6,161.6L767.8,161.6Z" fill="#f2f2f0" opacity="1" filter="url(#b2)"/><path d="M810.1,187.5L880.6,187.5L852.4,244.1L824.2,261.9L817.2,237.8Z" fill="#f0f0ec" opacity="0.95" filter="url(#b3)"/><path d="M933.4,97.1L1028.5,97.1L1028.5,195.5L933.4,195.5Z" fill="#f0f0ec" opacity="0.95" filter="url(#b2)"/><path d="M549.5,316.9L584.7,316.9L574.1,341.9L556.5,337.9Z" fill="#8a7c50" opacity="0.6" filter="url(#b4)"/>
</g>
<path d="M736.5,474.1L745.0,472.7L757.3,470.3L766.1,473.2L776.7,475.0L780.5,472.2L778.4,465.6L767.8,457.8L762.6,454.3L752.0,458.7L748.5,453.3L743.2,448.2L738.3,454.8L734.4,463.1L732.6,470.3ZM815.4,445.6L806.6,448.2L799.5,458.2L801.7,466.5L809.1,477.4L806.2,486.5L813.6,494.5L824.2,493.6L823.5,488.7L820.7,479.7L820.0,475.0L817.2,468.0L811.9,458.2L820.7,455.8L821.4,446.7ZM772.1,444.6L767.8,450.8L758.3,454.3L758.3,449.2ZM218.4,312.4L197.2,316.9L200.8,328.1L214.9,325.5ZM244.8,351.2L221.9,359.3L227.2,362.2L239.5,354.9ZM288.8,408.0L285.3,418.5L292.3,427.5L294.1,421.4ZM322.3,435.1L336.4,437.8L336.4,448.2L317.0,447.7L310.0,446.7L318.8,441.5ZM332.9,450.8L325.8,453.3L325.8,470.3L327.6,471.3L329.3,463.1L335.3,453.3ZM339.9,449.7L350.5,451.8L352.2,458.2L343.8,465.6L340.6,460.7L339.9,453.3ZM355.7,466.0L341.7,468.9L342.7,472.7L352.2,469.4ZM365.3,459.7L352.9,464.1L362.8,464.6ZM1019.7,395.8L1014.4,409.8L1002.1,421.4L1005.6,420.2L1016.2,411.0L1020.7,398.9ZM894.6,446.7L913.0,450.8L912.3,451.8L896.4,448.7ZM750.2,632.4L754.5,633.5L753.1,640.5L748.5,643.0L746.0,637.0ZM736.8,645.1L743.2,663.5L741.4,662.5L736.5,647.6ZM753.8,667.1L758.3,685.1L755.5,683.3L753.8,670.7ZM745.0,355.6L749.5,367.9L741.4,365.8Z" fill="#0a1626"/>
<path d="M355.7,534.0L362.8,536.7L367.0,544.5L371.6,552.2L368.1,556.0L361.7,548.4L357.5,542.6L355.0,536.7Z" fill="#2aa0c8" opacity="0.55" filter="url(#b2)"/>
<path d="M345.2,551.1L352.2,554.1L357.5,556.7L354.0,557.9L343.4,554.9Z" fill="#2a90b8" opacity="0.4" filter="url(#b2)"/>
<path d="M-1.8,421.4L7.0,420.8L14.1,419.6L24.7,419.1L35.2,415.1L45.8,409.8L52.8,405.6L59.9,402.6" fill="none" stroke="#a0a8a0" stroke-width="1.6" opacity="0.7"/>
<path d="M1243.3,415.6L1253.9,413.9L1264.5,420.8L1269.8,421.4" fill="none" stroke="#a0a8a0" stroke-width="1.4" opacity="0.6"/>
<g clip-path="url(#landclip)" opacity="0.9">
<path d="M332.0,68.0L358.0,63.0L378.0,74.0L374.0,94.0L358.0,108.0L354.0,132.0L351.0,162.0L344.0,162.0L340.0,132.0L330.0,104.0L322.0,87.0Z" fill="#eeede6" opacity="0.75" filter="url(#b3)"/>
<path d="M293.0,123.0L310.0,120.0L314.0,144.0L310.0,160.0L298.0,154.0Z" fill="#efeee8" filter="url(#b2)"/>
<path d="M336.0,202.0L355.0,204.0L355.0,227.0L338.0,222.0Z" fill="#efeee8" filter="url(#b2)"/>
<path d="M348.0,234.0L366.0,244.0L383.0,254.0L396.0,272.0L390.0,278.0L373.0,264.0L356.0,252.0L345.0,242.0Z" fill="#ecebe4" filter="url(#b2)"/>
</g>
<path d="M416.8,95.7L431.5,88.3L460.8,76.1L475.5,61.4L495.1,52.8L524.5,49.1L541.6,56.5L544.1,63.8L561.2,76.1L563.7,88.3L573.5,98.1L588.2,103.0L593.1,112.8L583.3,129.9L568.6,147.1L566.1,169.1L568.6,203.4L561.2,240.1L553.9,264.6L556.3,279.3L544.1,284.2L529.4,291.5L517.2,301.3L495.1,320.9L487.8,340.5L480.4,365.0L465.7,355.2L458.4,333.2L451.0,301.3L438.8,252.4L424.1,213.2L402.1,205.8L389.8,193.6L380.0,176.5L384.9,169.1L402.1,159.3L407.0,139.7L399.6,134.8L407.0,125.0L419.2,115.3Z" fill="#f6f6f5"/>
<g clip-path="url(#grclip)"><path d="M408.0,42.0L598.0,42.0L598.0,132.0L568.0,147.0L553.0,132.0L543.0,97.0L518.0,70.0L488.0,70.0L458.0,85.0L428.0,100.0L408.0,107.0Z" fill="#a08a62" opacity="0.75" filter="url(#b3)"/><path d="M543.0,72.0L558.0,78.0L563.0,107.0L568.0,137.0L556.0,144.0L548.0,112.0Z" fill="#8e6e48" opacity="0.7" filter="url(#b3)"/></g>
<path d="M0.0,1087.0L59.0,1097.0L66.0,1082.0L99.0,1054.0L125.0,1037.0L155.0,1034.0L178.0,1029.0L191.0,1017.0L204.0,1017.0L231.0,1029.0L264.0,1040.0L274.0,1037.0L270.0,1011.0L280.0,1001.0L303.0,1007.0L326.0,1011.0L346.0,1024.0L356.0,1011.0L376.0,1016.0L369.0,981.0L386.0,973.0L396.0,955.0L412.0,935.0L438.0,922.0L422.0,942.0L422.0,1001.0L419.0,1034.0L442.0,1050.0L468.0,1080.0L488.0,1087.0L514.0,1077.0L541.0,1047.0L547.0,1027.0L574.0,1001.0L588.0,990.0L633.0,979.0L681.0,977.0L719.0,983.0L745.0,968.0L797.0,953.0L820.0,944.0L850.0,953.0L883.0,964.0L902.0,976.0L917.0,953.0L939.0,946.0L977.0,936.0L1021.0,944.0L1074.0,940.0L1119.0,946.0L1163.0,964.0L1201.0,979.0L1227.0,994.0L1234.0,1013.0L1223.0,1043.0L1231.0,1069.0L1249.0,1073.0L1268.0,1084.0L1270.0,1272.0L-2.0,1272.0Z" fill="#f1f2f4"/>
<g clip-path="url(#antclip)" opacity="0.25">
<path d="M1208.0,992.0L1230.0,1002.0L1238.0,1082.0L1258.0,1182.0L1263.0,1267.0L1248.0,1267.0L1228.0,1172.0L1213.0,1082.0Z" fill="#8894a8" filter="url(#b3)"/>



<path d="M0.0,1222.0L28.0,1232.0L58.0,1267.0L0.0,1267.0Z" fill="#98a0b0" filter="url(#b3)"/>

</g>
</symbol>
</defs></svg>

<div id="title" class="a">
  <svg class="a" style="left:9px;top:8px" width="24" height="24" viewBox="0 0 24 24">
    <rect x="1" y="1" width="4" height="9" fill="#d01010"/><rect x="7" y="1" width="3" height="8" fill="#d01010"/><rect x="11" y="2" width="4" height="8" fill="#d01010"/>
    <path d="M5 6 L21 22 M20 7 L5 22" stroke="#000" stroke-width="3.2"/>
    <path d="M5 6 L21 22" stroke="#fff" stroke-width="1" opacity=".5"/>
  </svg>
  <div class="a t">Display Group 1 - View 1</div>
  <div class="a" style="left:1665px;top:19px;width:13px;height:1px;background:#fff"></div>
  <div class="a" style="left:1723px;top:13px;width:13px;height:13px;border:1.3px solid #fff"></div>
  <svg class="a" style="left:1781px;top:12px" width="16" height="16" viewBox="0 0 16 16"><path d="M1.5 1.5 L14.5 14.5 M14.5 1.5 L1.5 14.5" stroke="#fff" stroke-width="1.3"/></svg>
</div>

<div id="menu" class="a">
  <span style="left:13px;letter-spacing:2px">View</span>
  <span style="left:70px;letter-spacing:1.07px">Tools</span>
  <span style="left:128px;letter-spacing:-0.45px">GPS</span>
  <span style="left:177px;letter-spacing:1.55px">Options</span>
  <span style="left:254px;letter-spacing:1.78px">HotKeys</span>
</div>

<div id="tb" class="a">
<svg class="a" style="left:0;top:5px" width="700" height="24" viewBox="0 0 700 24">
<!-- y origin = 80 abs; icons occupy y 1..21 -->
<!-- 1 globe refresh -->
<g transform="translate(5,1)">
 <path d="M3 13 A8 8 0 1 1 17 6" fill="none" stroke="#0f6f74" stroke-width="5"/>
 <path d="M3 13 A8 8 0 1 1 17 6" fill="none" stroke="#3cc0c0" stroke-width="2.5"/>
 <path d="M14 3 L21 7 L15 11 Z" fill="#1a8a8a" stroke="#0d5a5a" stroke-width="1"/>
 <circle cx="10" cy="16" r="4" fill="#30b0b0" stroke="#0d5050" stroke-width="1.2"/>
 <circle cx="9" cy="7" r="2" fill="#fff"/>
</g>
<!-- 2 frame -->
<g transform="translate(32,2)">
 <rect x="0.5" y="0.5" width="17" height="17" fill="#5ab0b0" stroke="#1d3c3c" stroke-width="1.2"/>
 <rect x="3" y="3" width="12" height="12" fill="#b8f0f0" stroke="#1d5050" stroke-width="1.2"/>
 <rect x="5" y="5" width="8" height="8" fill="#eefcfc" stroke="#2a6a6a" stroke-width="1"/>
</g>
<!-- 3 diamond arrows -->
<g transform="translate(56,1)">
 <path d="M10 0 L20 10 L10 20 L0 10 Z" fill="#60c8c8" stroke="#1a4444" stroke-width="1.2"/>
 <path d="M10 3 V17 M3 10 H17" stroke="#1a4a4a" stroke-width="1.6"/>
 <path d="M10 2 L13 5 H7 Z M10 18 L13 15 H7 Z M2 10 L5 7 V13 Z M18 10 L15 7 V13 Z" fill="#1a4a4a"/>
</g>
<!-- 4 glasses -->
<g transform="translate(81,1)">
 <path d="M2 8 Q10 -3 17 6" fill="none" stroke="#111" stroke-width="2.2"/>
 <path d="M0 6 L4 10 L5 4 Z" fill="#111"/>
 <circle cx="5" cy="16" r="4" fill="#c8f4f4" stroke="#1a3a3a" stroke-width="1.3"/>
 <circle cx="15" cy="16" r="4" fill="#c8f4f4" stroke="#1a3a3a" stroke-width="1.3"/>
 <path d="M9 15 H11" stroke="#111" stroke-width="1.5"/>
</g>
<!-- 5 zoom in -->
<g transform="translate(106,1)">
 <path d="M12 12 L19 19" stroke="#1a5a5a" stroke-width="3.2" stroke-linecap="round"/>
 <circle cx="8" cy="8" r="7" fill="#d6fafa" stroke="#112222" stroke-width="1.8"/>
 <path d="M8 4 V12 M4 8 H12" stroke="#000" stroke-width="3"/>
</g>
<!-- 6 zoom out -->
<g transform="translate(131,1)">
 <path d="M12 12 L19 19" stroke="#1a5a5a" stroke-width="3.2" stroke-linecap="round"/>
 <circle cx="8" cy="8" r="7" fill="#d6fafa" stroke="#112222" stroke-width="1.8"/>
 <path d="M4 8 H12" stroke="#000" stroke-width="3"/>
</g>
<!-- 7 zoom map -->
<g transform="translate(156,1)">
 <rect x="9" y="0" width="11" height="9" fill="#1a9a30"/><rect x="14" y="0" width="6" height="5" fill="#2040c0"/>
 <path d="M12 12 L18 19" stroke="#1a4a4a" stroke-width="3" stroke-linecap="round"/>
 <circle cx="8" cy="9" r="7" fill="#d8f4f0" stroke="#111" stroke-width="1.8"/>
 <path d="M6 5 V11 H12" stroke="#3040c0" stroke-width="1.5" fill="none"/>
 <path d="M7 3 Q11 2 13 6 L8 9 Z" fill="#20c040"/>
</g>
<!-- 8 zoom to center arrows -->
<g transform="translate(181,1)">
 <path d="M1 1 L8 8 M19 1 L12 8 M1 19 L8 12 M19 19 L12 12" stroke="#2a5a5a" stroke-width="5"/>
 <path d="M1 1 L8 8 M19 1 L12 8 M1 19 L8 12 M19 19 L12 12" stroke="#40e0e0" stroke-width="3"/>
 <path d="M3 9 H9 V3 Z M17 9 H11 V3 Z M3 11 H9 V17 Z M17 11 H11 V17 Z" fill="#40e0e0" stroke="#2a5a5a" stroke-width=".8"/>
 <rect x="9" y="9" width="2" height="2" fill="#fff"/>
</g>
<!-- 9 overlapping maps -->
<g transform="translate(206,1)">
 <rect x="0" y="0" width="9" height="9" fill="#20a040"/><rect x="2" y="3" width="5" height="4" fill="#2060c0"/>
 <rect x="11" y="11" width="9" height="9" fill="#20a040"/><rect x="13" y="13" width="5" height="4" fill="#2060c0"/>
 <path d="M10 0 L20 10 H10 Z" fill="#111"/><path d="M0 11 L10 20 V11 Z" fill="#111"/>
</g>
<!-- 10 tools -->
<g transform="translate(231,1)">
 <path d="M3 5 L17 19" stroke="#c8c8c8" stroke-width="7"/>
 <path d="M9 2 L18 12" stroke="#909090" stroke-width="3"/>
 <ellipse cx="4" cy="8" rx="2.5" ry="3.5" fill="#5040e0" transform="rotate(-35 4 8)"/>
 <ellipse cx="9" cy="16" rx="2.5" ry="3.5" fill="#e02020" transform="rotate(-35 9 16)"/>
 <path d="M13 0 L17 3" stroke="#777" stroke-width="2"/>
</g>
<!-- 11 globe printer -->
<g transform="translate(257,1)">
 <circle cx="12" cy="9" r="8" fill="#1838d8"/>
 <path d="M5 7 Q12 4 19 10 M7 12 Q12 10 17 14" stroke="#80b0ff" stroke-width="1.5" fill="none"/>
 <path d="M6 15 Q12 17 18 15" stroke="#404040" stroke-width="2" fill="none"/>
 <rect x="0" y="15" width="8" height="5" fill="#111"/><rect x="2" y="12" width="4" height="4" fill="#fff" stroke="#111"/>
</g>
<!-- 12 camera -->
<g transform="translate(281,1)">
 <rect x="1" y="6" width="19" height="13" rx="2" fill="#505050"/>
 <path d="M5 6 L7 2 H11 L12 6" fill="#909090"/>
 <rect x="14" y="1" width="5" height="6" fill="#f0e040"/>
 <circle cx="9" cy="13" r="4.5" fill="#40b0d0" stroke="#d0d0d0" stroke-width="1.2"/>
</g>
<!-- 13 add layer -->
<g transform="translate(316,1)">
 <path d="M1 10 H7 M4 7 V13" stroke="#1030e0" stroke-width="2.6"/>
 <path d="M10 8 L18 1 M10 8 H20 M10 13 H20 M10 19 H20 M10 19 L17 14" stroke="#222" stroke-width="1.2" fill="none"/>
 <rect x="10" y="9" width="10" height="4" fill="#e01010"/>
</g>
<!-- 14 pressed select-1 -->
<g transform="translate(348,0)">
 <rect x="0.5" y="0.5" width="24" height="23" fill="#d4d4d4" stroke="#808080"/>
 <path d="M1 23.5 H24.5 V1" stroke="#fff" fill="none"/>
 <text x="4" y="11" font-family="Liberation Serif" font-size="10" fill="#111">1</text>
 <path d="M11 8 L11 20 L14 17 L17 22 L19 21 L16 16 L20 16 Z" fill="#30d8e8"/>
</g>
<!-- 15 +/- select -->
<g transform="translate(375,1)">
 <text x="0" y="9" font-family="Liberation Sans" font-size="10" fill="#111">+</text>
 <path d="M1 14 L10 3" stroke="#111" stroke-width="1.2"/><path d="M7 12 H12" stroke="#111" stroke-width="1.3"/>
 <path d="M11 8 L11 20 L14 17 L17 22 L19 21 L16 16 L20 16 Z" fill="#30d8e8"/>
</g>
<!-- 16 ? select -->
<g transform="translate(401,1)">
 <text x="1" y="10" font-family="Liberation Sans" font-size="11" fill="#606060">?</text>
 <path d="M11 8 L11 20 L14 17 L17 22 L19 21 L16 16 L20 16 Z" fill="#909090"/>
</g>
<!-- 17 back -->
<g transform="translate(427,1)">
 <path d="M0 10 L4 5 V15 Z" fill="#707070"/>
 <path d="M6 8 L9 5 H18 V12 L15 15 H6 Z" fill="#a8a8a8"/><path d="M6 8 H15 V15 M15 8 L18 5" stroke="#888" fill="none"/>
</g>
<!-- 18 forward -->
<g transform="translate(451,1)">
 <path d="M20 10 L16 5 V15 Z" fill="#707070"/>
 <path d="M2 8 L5 5 H14 V12 L11 15 H2 Z" fill="#a8a8a8"/><path d="M2 8 H11 V15 M11 8 L14 5" stroke="#888" fill="none"/>
</g>
<!-- 19 prohibit -->
<g transform="translate(476,1)">
 <path d="M7 6 L9 14 M10 5 L13 12" stroke="#60c0e0" stroke-width="2"/>
 <circle cx="10" cy="10" r="8" fill="none" stroke="#e01010" stroke-width="2.6"/>
 <path d="M4.5 15.5 L15.5 4.5" stroke="#e01010" stroke-width="2.6"/>
</g>
<!-- 20 red move -->
<g transform="translate(511,1)">
 <path d="M10 2 V18 M2 10 H18" stroke="#e01010" stroke-width="2.6"/>
 <path d="M10 0 L14 5 H6 Z M10 20 L14 15 H6 Z M0 10 L5 6 V14 Z M20 10 L15 6 V14 Z" fill="#e01010"/>
</g>
<!-- 21 pressed red zoom -->
<g transform="translate(533,0)">
 <rect x="0.5" y="0.5" width="24" height="23" fill="#d4d4d4" stroke="#808080"/>
 <path d="M1 23.5 H24.5 V1" stroke="#fff" fill="none"/>
 <path d="M15 15 L21 21" stroke="#a01010" stroke-width="3.2" stroke-linecap="round"/>
 <circle cx="11" cy="10" r="7.5" fill="#f0d0d0" stroke="#d01010" stroke-width="2.5"/>
 <rect x="7" y="7.5" width="8" height="5" fill="#e8e8e8" stroke="#d01010" stroke-width="1.8"/>
</g>
<!-- 22 red arrow -->
<g transform="translate(563,1)">
 <path d="M2 1 L2 16 L6 12 L10 20 L13 18 L9 11 L15 11 Z" fill="#e01010" stroke="#300" stroke-width="1"/>
</g>
<!-- 23 pencil -->
<g transform="translate(586,1)">
 <path d="M17 1 L20 4 L7 17 L4 14 Z" fill="#f0e040" stroke="#706010" stroke-width="1"/>
 <path d="M4 14 L7 17 L1 20 Z" fill="#e0b080" stroke="#333" stroke-width=".8"/>
 <path d="M1 20 L2.5 18.5" stroke="#111" stroke-width="1.5"/>
</g>
<!-- 24 ruler -->
<g transform="translate(611,1)">
 <rect x="0" y="2" width="5" height="18" fill="#e8d840" stroke="#605010" stroke-width=".8"/>
 <path d="M5 20 H20 L20 15 H5 Z" fill="#e01010"/>
 <path d="M6 14 L18 2" stroke="#e0a060" stroke-width="3"/><path d="M18 2 L20 0" stroke="#333" stroke-width="2"/>
 <path d="M1 5 H3 M1 8 H3 M1 11 H3 M1 14 H3" stroke="#605010" stroke-width=".8"/>
</g>
<!-- 25 map red box -->
<g transform="translate(637,1)">
 <rect x="0" y="2" width="18" height="17" fill="#20a040" stroke="#222" stroke-width="1"/>
 <rect x="9" y="10" width="8" height="8" fill="#2060d0"/>
 <rect x="5" y="1" width="14" height="11" fill="#f0f0f0" stroke="#e01010" stroke-width="1.6"/>
 <path d="M8 10 L16 3" stroke="#111" stroke-width="1.5"/>
 <path d="M0 20 H20" stroke="#606060" stroke-width="1.5"/>
</g>
</svg>
<svg class="a" style="left:1795px;top:6px" width="20" height="22" viewBox="0 0 20 22">
 <path d="M4 7 Q4 2 10 2 Q16 2 16 7 Q16 10 11 12 V15" fill="none" stroke="#111" stroke-width="4.5" stroke-linecap="round"/>
 <path d="M4 7 Q4 2 10 2 Q16 2 16 7 Q16 10 11 12 V15" fill="none" stroke="#f0e050" stroke-width="2" stroke-linecap="round"/>
 <circle cx="11" cy="19" r="2.2" fill="#f0e050" stroke="#111" stroke-width="1.3"/>
</svg>

</div>

<div id="left" class="a">
</div>
<div class="a" style="left:0;top:0;width:0;height:0">
<!-- tree panel -->
<div class="a" style="left:2px;top:109px;width:309px;height:798px;background:#f0f0f0"></div>
<div class="a" style="left:2px;top:905px;width:310px;height:2px;background:#6a6a6a"></div>
<div class="a" style="left:309px;top:109px;width:2px;height:798px;background:#6a6a6a"></div>
<!-- vertical scrollbar -->
<div class="a" style="left:311px;top:109px;width:2px;height:796px;background:#6a6a6a"></div>
<div class="a" style="left:313px;top:110px;width:12px;height:793px;background:#f0f0f0;border-left:2px solid #fff"></div>
<div class="a" style="left:323px;top:125px;width:2px;height:768px;background:#6a6a6a"></div>
<div class="a" style="left:313px;top:110px;width:13px;height:15px;background:#c4c4c4"></div>
<svg class="a" style="left:313px;top:110px" width="14" height="16"><path d="M7 2 L12 13 H2 Z" fill="#f4f4f4" stroke="#6a6a6a" stroke-width="1.4"/><path d="M0 15 H14" stroke="#555" stroke-width="2"/></svg>
<div class="a" style="left:313px;top:891px;width:13px;height:13px;background:#c4c4c4"></div>
<svg class="a" style="left:313px;top:891px" width="14" height="14"><path d="M2 1 H12 L7 12 Z" fill="#e0e0e0"/><path d="M12 1 L7 12" stroke="#6a6a6a" stroke-width="1.6"/><path d="M0 0 H11" stroke="#fff" stroke-width="1.5"/></svg>
<!-- horizontal scrollbar -->
<div class="a" style="left:2px;top:909px;width:306px;height:13px;background:#c4c4c4"></div>
<div class="a" style="left:19px;top:909px;width:260px;height:13px;background:#f0f0f0;border-top:2px solid #fff;border-bottom:2px solid #6a6a6a;border-right:2px solid #6a6a6a"></div>
<svg class="a" style="left:3px;top:909px" width="15" height="14"><path d="M2 6.5 L13 1 V13 Z" fill="#e8e8e8"/><path d="M2 6.5 L13 13 M13 1 V13" stroke="#555" stroke-width="1.6"/></svg>
<svg class="a" style="left:293px;top:909px" width="15" height="14"><path d="M13 6.5 L2 1 V13 Z" fill="#e8e8e8"/><path d="M13 7 L2 13" stroke="#555" stroke-width="1.6"/></svg>
<!-- transparency -->
<div class="a" style="left:5px;top:938px;font-size:15px;color:#9a9a9a;letter-spacing:1.31px;white-space:nowrap">Transparency</div>
<div class="a" style="left:114px;top:931px;width:165px;height:33px;background:#5a5a5a;background-image:repeating-linear-gradient(45deg,rgba(255,255,255,.18) 0 1px,transparent 1px 3px),repeating-linear-gradient(-45deg,rgba(255,255,255,.18) 0 1px,transparent 1px 3px)"></div>
<div class="a" style="left:116px;top:933px;width:36px;height:28px;background:#777;border-right:2px solid #3a3a3a;border-bottom:2px solid #3a3a3a;background-image:repeating-linear-gradient(45deg,rgba(255,255,255,.2) 0 1px,transparent 1px 3px)"></div>
<div class="a" style="left:133px;top:933px;width:2px;height:26px;background:#3a3a3a"></div>
<div class="a" style="left:279px;top:931px;width:49px;height:2px;background:#6a6a6a"></div>
<div class="a" style="left:279px;top:933px;width:49px;height:31px;background:#fff"></div>
<div class="a" style="left:313px;top:938px;font-size:15px;color:#9a9a9a">0</div>
<!-- overview -->
<div class="a" style="left:2px;top:969px;width:326px;height:12px;background:#a2a2a2"></div>
<div class="a" style="left:165px;top:973px;width:1px;height:8px;background:#e8e060"></div>
<div class="a" style="left:2px;top:981px;width:326px;height:326px;border:1.5px solid #e6e660;background:#050a14;overflow:hidden">
  <svg class="a" style="left:1px;top:0" width="323" height="324" viewBox="0 0 1268 1267" preserveAspectRatio="none"><use href="#world"/></svg>
</div>
<div class="a" style="left:2px;top:1307px;width:326px;height:10px;background:#a2a2a2"></div>
<div class="a" style="left:165px;top:1307px;width:1px;height:7px;background:#e8e060"></div>
<!-- zoom row -->
<div class="a" style="left:4px;top:1330px;font-size:15.5px;color:#111;letter-spacing:1.43px">Zoom</div>
<div class="a" style="left:51px;top:1324px;width:134px;height:33px;background:#f0f0f0;border-top:2px solid #6a6a6a;border-left:2px solid #6a6a6a"></div>
<div class="a" style="left:56px;top:1330px;font-size:15.5px;color:#111;letter-spacing:1.09px;white-space:nowrap">View Scale</div>
<div class="a" style="left:161px;top:1331px;width:21px;height:20px;background:#f0f0f0;border-right:2px solid #6a6a6a;border-bottom:2px solid #6a6a6a"></div>
<svg class="a" style="left:164px;top:1337px" width="14" height="8"><path d="M0 0 H14 L7 7 Z" fill="#000"/></svg>
<div class="a" style="left:185px;top:1324px;width:120px;height:33px;background:#fff;border-top:2px solid #6a6a6a;border-left:2px solid #6a6a6a"></div>
<div class="a" style="left:193px;top:1330px;font-size:15.5px;color:#111;letter-spacing:1.57px;white-space:nowrap">1:201649161</div>
<div class="a" style="left:305px;top:1331px;width:21px;height:20px;background:#f0f0f0;border-right:2px solid #6a6a6a;border-bottom:2px solid #6a6a6a"></div>
<svg class="a" style="left:309px;top:1337px" width="14" height="8"><path d="M0 0 H14 L7 7 Z" fill="#000"/></svg>
<div class="a" style="left:2px;top:1361px;width:326px;height:2px;background:#8a8a8a"></div>
<!-- bottom icons -->
<svg class="a" style="left:0;top:1364px" width="330" height="30">
 <g transform="translate(3,3)"><rect x="0.5" y="0.5" width="23" height="23" fill="#e0e0e0" stroke="#fff"/><path d="M0.5 23.5 V0.5 H23" stroke="#888" fill="none"/>
  <rect x="3" y="4" width="19" height="17" fill="#606060"/>
  <rect x="4" y="5" width="5" height="4" fill="#2030e0"/><rect x="4" y="10" width="5" height="4" fill="#20a030"/><rect x="4" y="15" width="5" height="4" fill="#e01010"/>
  <path d="M11 7 H20 M11 12 H20 M11 17 H20" stroke="#fff" stroke-width="1.6" stroke-dasharray="2 1"/></g>
 <g transform="translate(31,3)"><rect x="0.5" y="0.5" width="23" height="23" fill="#e0e0e0" stroke="#fff"/><path d="M0.5 23.5 V0.5 H23" stroke="#888" fill="none"/>
  <rect x="3" y="3" width="13" height="13" fill="#f0f0a0" stroke="#888"/><rect x="7" y="7" width="14" height="14" fill="#30b0f0" stroke="#206090"/><rect x="7" y="7" width="10" height="10" fill="#a0e890"/></g>
 <g transform="translate(61,3)"><path d="M14 14 L21 21" stroke="#1a5a5a" stroke-width="3.2" stroke-linecap="round"/><circle cx="10" cy="10" r="7.5" fill="#c8f4f4" stroke="#112222" stroke-width="2"/></g>
 <g transform="translate(89,3)"><rect x="0.5" y="0.5" width="23" height="23" fill="#e0e0e0" stroke="#fff"/><path d="M0.5 23.5 V0.5 H23" stroke="#888" fill="none"/>
  <rect x="5" y="2" width="17" height="16" fill="#20a040" stroke="#802020"/><rect x="14" y="3" width="7" height="8" fill="#2060d0"/><rect x="2" y="13" width="9" height="9" fill="#20a040" stroke="#333"/></g>
 <g transform="translate(119,3)"><rect x="10" y="1" width="11" height="9" fill="#20a040"/><rect x="15" y="1" width="6" height="5" fill="#2040c0"/><path d="M14 14 L20 21" stroke="#1a4a4a" stroke-width="3" stroke-linecap="round"/><circle cx="9" cy="10" r="7.5" fill="#d8f4f0" stroke="#111" stroke-width="2"/><path d="M7 6 V12 H13" stroke="#3040c0" stroke-width="1.5" fill="none"/></g>
 <g transform="translate(147,3)"><rect x="0.5" y="0.5" width="23" height="23" fill="#d0d0d0" stroke="#fff"/><path d="M0.5 23.5 V0.5 H23" stroke="#888" fill="none"/>
  <path d="M15 15 L21 21" stroke="#1a5a5a" stroke-width="3.2" stroke-linecap="round"/><circle cx="11" cy="10" r="7.5" fill="#d6fafa" stroke="#112222" stroke-width="2"/><path d="M11 6 V14 M7 10 H15" stroke="#000" stroke-width="3"/></g>
 <path d="M320 16 L326 10 V22 Z" fill="#000"/>
</svg>
<!-- tree rows -->
<svg class="a" style="left:0;top:108px" width="70" height="52">
 <g transform="translate(5,9)"><rect x="0.5" y="0.5" width="10" height="10" fill="#fff" stroke="#222"/><path d="M2.5 5.5 H8.5" stroke="#111" stroke-width="1.3"/></g>
 <g transform="translate(5,34)"><rect x="0.5" y="0.5" width="10" height="10" fill="#fff" stroke="#222"/><path d="M2.5 5.5 H8.5" stroke="#111" stroke-width="1.3"/></g>
 <g transform="translate(20,6)"><rect x="1" y="3" width="16" height="15" fill="#e4e4e4" stroke="#c8c8c8"/><path d="M2 11 L7 17 L18 1" fill="none" stroke="#000" stroke-width="3.2"/></g>
 <g transform="translate(20,31)"><rect x="1" y="3" width="16" height="15" fill="#e4e4e4" stroke="#c8c8c8"/><path d="M2 11 L7 17 L18 1" fill="none" stroke="#000" stroke-width="3.2"/></g>
 <g transform="translate(40,3)"><circle cx="10.5" cy="10.5" r="10" fill="#1a70d0"/><path d="M3 5 Q8 2 11 5 Q9 9 5 10 Q3 14 6 18 Q1 14 1 9 Z M13 8 Q18 6 20 11 Q18 16 14 15 Q11 12 13 8 Z" fill="#50b030"/><path d="M8 4 Q12 6 10 9" fill="#e0d040"/><circle cx="7" cy="6" r="2.5" fill="#fff" opacity=".5"/></g>
 <g transform="translate(40,28)"><circle cx="10.5" cy="10.5" r="10" fill="#1a70d0"/><path d="M3 5 Q8 2 11 5 Q9 9 5 10 Q3 14 6 18 Q1 14 1 9 Z M13 8 Q18 6 20 11 Q18 16 14 15 Q11 12 13 8 Z" fill="#50b030"/><path d="M8 4 Q12 6 10 9" fill="#e0d040"/><circle cx="7" cy="6" r="2.5" fill="#fff" opacity=".5"/></g>
</svg>
<div class="a" style="left:63px;top:114px;font-size:16px;font-weight:bold;color:#b06a3c;letter-spacing:1.68px;white-space:nowrap">mapbox</div>
<div class="a" style="left:63px;top:141px;font-size:15.5px;color:#b8703c;letter-spacing:1.15px;white-space:nowrap">Microsoft Azure Maps Imagery</div>

</div>

<div id="mapbg" class="a">
  <svg class="a" style="left:108px;top:10px" width="1268" height="1267"><use href="#world"/></svg>
<style>
.halo{position:absolute;color:#fff;font-weight:bold;white-space:nowrap;line-height:1;text-shadow:-1.5px 0 #000,1.5px 0 #000,0 -1.5px #000,0 1.5px #000,-1px -1px #000,1px 1px #000,-1px 1px #000,1px -1px #000}
</style>
<div class="halo" style="left:1168px;top:1263px;font-size:13px;letter-spacing:-0.55px">Copyright (C) mapbox and contributors</div>
<div class="a" style="left:1303px;top:1274px;width:67px;height:6px;background:#fff;border:1.5px solid #000"></div>
<div class="a" style="left:1376px;top:1274px;width:104px;height:6px;background:#fff;border:1.5px solid #000"></div>
<div class="halo" style="left:1311px;top:1259px;font-size:13px;letter-spacing:-0.6px">2000 km</div>
<div class="halo" style="left:1403px;top:1259px;font-size:13px;letter-spacing:-0.4px">2000 mi</div>

</div>

<div id="status" class="a">
  <span style="left:5px;top:6px;letter-spacing:1.3px">Time to draw: 0.050 seconds</span>
  <div class="sep" style="left:948px"></div>
  <div class="a" style="left:952px;top:5px;width:20px;height:20px;border:2px solid #40c8e0;background:#fff"><svg width="16" height="16" viewBox="0 0 16 16"><path d="M8 3V13M3 8H13" stroke="#d01010" stroke-width="2"/></svg></div>
  <div class="sep" style="left:973px"></div>
  <span style="left:978px;top:6px;letter-spacing:1.02px">0 E &nbsp;0 N m</span>
  <div class="sep" style="left:1269px"></div>
  <span style="left:1274px;top:6px;letter-spacing:1.06px">E 0 00 &nbsp;N 0 00</span>
  <div class="sep" style="left:1565px"></div>
  <div class="sep" style="left:1676px"></div>
  <span style="left:1683px;top:6px;letter-spacing:1.67px">1:201649161</span>
  <div class="sep" style="left:1792px"></div>
</div>
<div class="a bluel"></div><div class="a bluer"></div><div class="a blueb"></div>
</body></html>
